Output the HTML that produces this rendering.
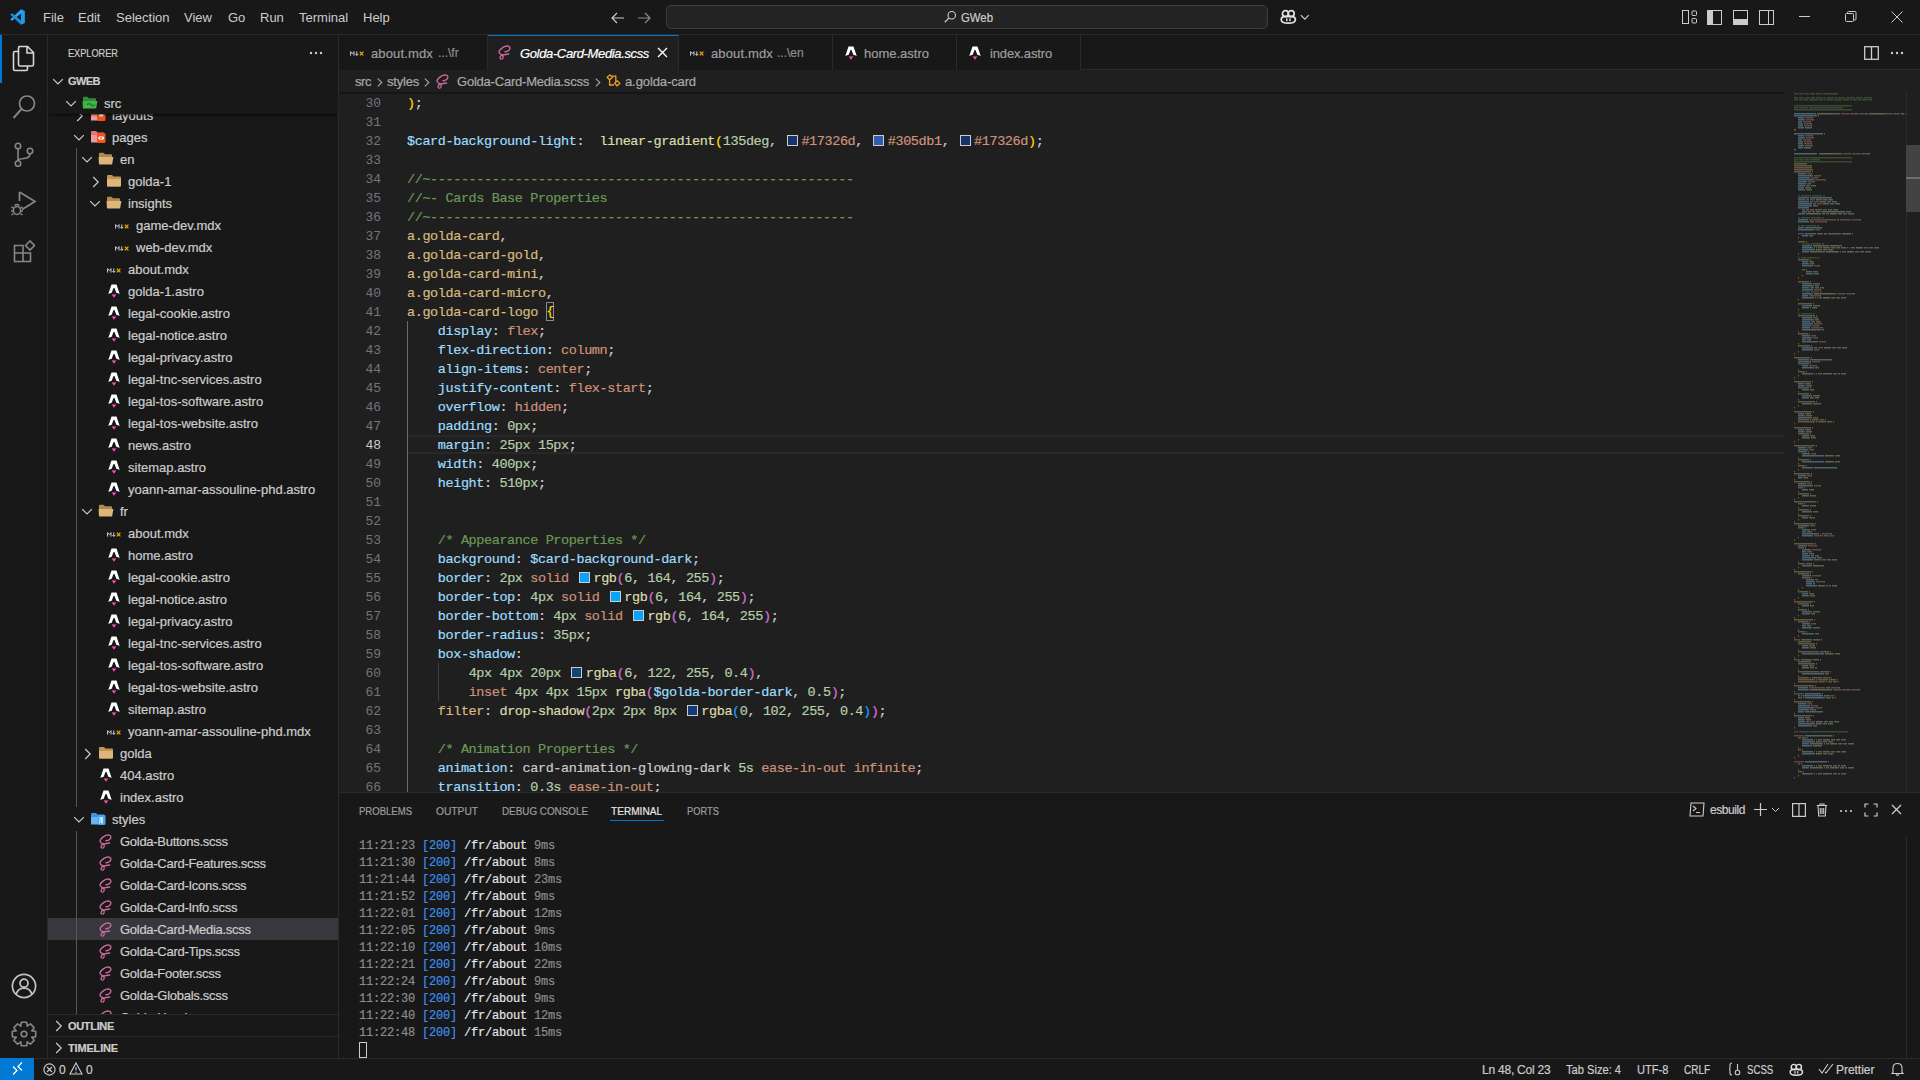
<!DOCTYPE html><html><head><meta charset="utf-8"><style>
*{box-sizing:border-box;margin:0;padding:0}
html,body{width:1920px;height:1080px;overflow:hidden;background:#181818;font-family:"Liberation Sans",sans-serif;color:#cccccc;font-size:13px}
span.abs{-webkit-text-stroke:0.2px currentColor}
.abs{position:absolute}
svg{position:absolute;overflow:visible}
.mono{font-family:"Liberation Mono",monospace}
.menu span{position:absolute;top:9px;font-size:13px;color:#cccccc;line-height:17px}
.row{position:absolute;left:48px;width:290px;height:22px;line-height:22px;font-size:13px;color:#cccccc;white-space:nowrap}
.row .t{position:absolute;top:0}
.code{position:absolute;left:407px;font-family:"Liberation Mono",monospace;font-size:13.5px;letter-spacing:-0.4px;-webkit-text-stroke:0.2px currentColor;white-space:pre;height:19px;line-height:19px;color:#cccccc}
.ln{position:absolute;left:340px;width:41px;text-align:right;font-family:"Liberation Mono",monospace;font-size:13px;letter-spacing:-0.1px;height:19px;line-height:19px;color:#6e7681}
.v{color:#9cdcfe}.p{color:#9cdcfe}.s{color:#ce9178}.n{color:#b5cea8}.c{color:#6a9955}.sel{color:#d7ba7d}.f{color:#dcdcaa}
.b1{color:#ffd700}.b2{color:#da70d6}.b3{color:#179fff}
.sw{display:inline-block;width:11px;height:11px;border:1px solid #cccccc;margin:0 3.5px 0 2.5px;vertical-align:-1px;letter-spacing:0;-webkit-text-stroke:0}
.term{position:absolute;left:359px;font-family:"Liberation Mono",monospace;font-size:12px;letter-spacing:-0.2px;-webkit-text-stroke:0.2px currentColor;white-space:pre;height:17px;line-height:17px}
</style></head><body>
<div class="abs" style="left:0;top:0;width:1920px;height:35px;background:#181818;border-bottom:1px solid #2b2b2b"></div>
<svg style="left:9px;top:9px" width="17" height="16" viewBox="0 0 100 100">
<path fill="#1f9cf0" d="M72 2 L96 13 V87 L72 98 Z"/><path fill="#2aa5f5" d="M72 2 L80 22 L16 74 L4 66 Z"/><path fill="#1a8fe0" d="M4 34 L16 26 L80 78 L72 98 Z"/>
</svg>
<div class="menu">
<span style="left:43px">File</span>
<span style="left:78px">Edit</span>
<span style="left:116px">Selection</span>
<span style="left:184px">View</span>
<span style="left:228px">Go</span>
<span style="left:260px">Run</span>
<span style="left:299px">Terminal</span>
<span style="left:363px">Help</span>
</div>
<svg style="left:610px;top:10px" width="16" height="16" viewBox="0 0 16 16"><path d="M2 8 H14 M7 3 L2 8 L7 13" stroke="#cccccc" stroke-width="1.2" fill="none"/></svg>
<svg style="left:636px;top:10px" width="16" height="16" viewBox="0 0 16 16"><path d="M2 8 H14 M9 3 L14 8 L9 13" stroke="#8b8b8b" stroke-width="1.2" fill="none"/></svg>
<div class="abs" style="left:666px;top:5px;width:602px;height:24px;background:#242424;border:1px solid #3c3c3c;border-radius:5px"></div>
<svg style="left:943px;top:10px" width="14" height="14" viewBox="0 0 16 16"><circle cx="10" cy="6" r="4.3" stroke="#cccccc" stroke-width="1.3" fill="none"/><path d="M7 9 L2 14" stroke="#cccccc" stroke-width="1.4"/></svg>
<span class="abs" style="left:961px;top:9px;font-size:13px;line-height:17px;color:#cccccc;white-space:nowrap;transform:scaleX(0.8742);transform-origin:0 0;">GWeb</span>
<svg style="left:1280px;top:9px" width="17" height="15" viewBox="0 0 17 15"><circle cx="5.4" cy="4.6" r="3" fill="none" stroke="#e0e0e0" stroke-width="1.7"/><circle cx="11.2" cy="4.6" r="3" fill="none" stroke="#e0e0e0" stroke-width="1.7"/><path d="M1.2 10.8 Q1.2 7.6 4.5 7.6 H12.1 Q15.4 7.6 15.4 10.8 Q15.4 14.2 8.3 14.2 Q1.2 14.2 1.2 10.8 Z" fill="none" stroke="#e0e0e0" stroke-width="1.7"/><rect x="6" y="9.4" width="1.5" height="2.8" fill="#e0e0e0"/><rect x="9.2" y="9.4" width="1.5" height="2.8" fill="#e0e0e0"/></svg>
<svg style="left:1300px;top:14px" width="10" height="7" viewBox="0 0 10 7"><path d="M0.8 1.2 L4.8 5.2 L8.8 1.2" stroke="#cccccc" stroke-width="1.2" fill="none"/></svg>
<svg style="left:1682px;top:10px" width="16" height="14" viewBox="0 0 16 14"><rect x="0.5" y="0.5" width="6" height="13" fill="none" stroke="#cccccc"/><rect x="10" y="1" width="4.5" height="4.5" rx="1" fill="none" stroke="#cccccc"/><rect x="10" y="8.5" width="4.5" height="4.5" rx="1" fill="none" stroke="#cccccc"/></svg>
<svg style="left:1707px;top:10px" width="16" height="15" viewBox="0 0 16 15"><rect x="0.5" y="0.5" width="14" height="14" fill="none" stroke="#cccccc"/><rect x="1" y="1" width="5" height="13" fill="#cccccc"/></svg>
<svg style="left:1733px;top:10px" width="16" height="15" viewBox="0 0 16 15"><rect x="0.5" y="0.5" width="14" height="14" fill="none" stroke="#cccccc"/><rect x="1" y="9" width="13" height="5" fill="#cccccc"/></svg>
<svg style="left:1759px;top:10px" width="16" height="15" viewBox="0 0 16 15"><rect x="0.5" y="0.5" width="14" height="14" fill="none" stroke="#cccccc"/><path d="M9.5 1 V14" stroke="#cccccc"/></svg>
<svg style="left:1799px;top:16px" width="12" height="2" viewBox="0 0 12 2"><path d="M0 0.5 H11" stroke="#cccccc" stroke-width="1"/></svg>
<svg style="left:1845px;top:11px" width="12" height="12" viewBox="0 0 12 12"><rect x="0.5" y="2.5" width="8" height="8" rx="1" fill="none" stroke="#cccccc"/><path d="M2.5 2.5 V1.5 Q2.5 0.5 3.5 0.5 H10 Q11 0.5 11 1.5 V8 Q11 9 10 9 H9" fill="none" stroke="#cccccc"/></svg>
<svg style="left:1891px;top:11px" width="12" height="12" viewBox="0 0 12 12"><path d="M0.5 0.5 L11.5 11.5 M11.5 0.5 L0.5 11.5" stroke="#cccccc" stroke-width="1"/></svg>
<div class="abs" style="left:0;top:35px;width:48px;height:1023px;background:#181818;border-right:1px solid #2b2b2b"></div>
<div class="abs" style="left:0;top:35px;width:2px;height:48px;background:#0078d4"></div>
<svg style="left:12px;top:45px" width="24" height="27" viewBox="0 0 24 27">
<path d="M6.5 6.5 H3 Q1.5 6.5 1.5 8 V24 Q1.5 25.5 3 25.5 H14 Q15.5 25.5 15.5 24 V21" fill="none" stroke="#d7d7d7" stroke-width="1.6"/>
<path d="M6.5 1.5 H15.5 L21.5 7.5 V19.5 Q21.5 21 20 21 H8 Q6.5 21 6.5 19.5 V3 Q6.5 1.5 8 1.5 Z M15 1.5 V8 H21.5" fill="none" stroke="#d7d7d7" stroke-width="1.6"/>
</svg>
<svg style="left:12px;top:94px" width="25" height="26" viewBox="0 0 25 26">
<circle cx="15" cy="9.5" r="7.5" fill="none" stroke="#868686" stroke-width="1.7"/><path d="M9.5 15 L1.5 24" stroke="#868686" stroke-width="1.9"/></svg>
<svg style="left:13px;top:142px" width="22" height="26" viewBox="0 0 22 26">
<circle cx="5" cy="4" r="2.7" fill="none" stroke="#868686" stroke-width="1.6"/><circle cx="5" cy="21.5" r="2.7" fill="none" stroke="#868686" stroke-width="1.6"/><circle cx="17" cy="9" r="2.7" fill="none" stroke="#868686" stroke-width="1.6"/>
<path d="M5 6.7 V18.8 M17 11.7 Q17 16 11 16.5 Q5 17 5 18.8" fill="none" stroke="#868686" stroke-width="1.6"/></svg>
<svg style="left:10px;top:190px" width="27" height="27" viewBox="0 0 27 27">
<path d="M9.5 2 L25 11.5 L12 19.5" fill="none" stroke="#868686" stroke-width="1.7"/><path d="M9.5 2 V11" stroke="#868686" stroke-width="1.7"/>
<ellipse cx="7" cy="20.5" rx="3.6" ry="4" fill="none" stroke="#868686" stroke-width="1.6"/><path d="M1.5 17 L3.5 18 M1 21 H3.5 M1.5 25 L3.5 23.5 M12.5 17 L10.5 18 M13 21 H10.5 M12.5 25 L10.5 23.5 M4.5 15.5 Q7 13.5 9.5 15.5" fill="none" stroke="#868686" stroke-width="1.4"/></svg>
<svg style="left:13px;top:239px" width="24" height="24" viewBox="0 0 24 24">
<path d="M1.5 6.5 H10 V14 H17.5 V22.5 H1.5 Z M1.5 14 H10 V22.5" fill="none" stroke="#868686" stroke-width="1.6"/>
<path d="M12.5 6.5 L17 2 L21.5 6.5 L17 11 Z" fill="none" stroke="#868686" stroke-width="1.6"/></svg>
<svg style="left:11px;top:973px" width="26" height="26" viewBox="0 0 26 26">
<circle cx="13" cy="13" r="11.6" fill="none" stroke="#c3c3c3" stroke-width="1.7"/><circle cx="13" cy="10.2" r="4" fill="none" stroke="#c3c3c3" stroke-width="1.7"/>
<path d="M5.2 21.2 Q7 15.2 13 15.2 Q19 15.2 20.8 21.2" fill="none" stroke="#c3c3c3" stroke-width="1.7"/></svg>
<svg style="left:11px;top:1021px" width="26" height="26" viewBox="0 0 26 26">
<path d="M24.71 10.38 L24.71 15.62 L20.76 16.47 L20.94 16.04 L23.13 19.43 L19.43 23.13 L16.04 20.94 L16.47 20.76 L15.62 24.71 L10.38 24.71 L9.53 20.76 L9.96 20.94 L6.57 23.13 L2.87 19.43 L5.06 16.04 L5.24 16.47 L1.29 15.62 L1.29 10.38 L5.24 9.53 L5.06 9.96 L2.87 6.57 L6.57 2.87 L9.96 5.06 L9.53 5.24 L10.38 1.29 L15.62 1.29 L16.47 5.24 L16.04 5.06 L19.43 2.87 L23.13 6.57 L20.94 9.96 L20.76 9.53 Z" fill="none" stroke="#868686" stroke-width="1.6" stroke-linejoin="round"/><circle cx="13" cy="13" r="2.8" fill="none" stroke="#868686" stroke-width="1.6"/></svg>
<div class="abs" style="left:48px;top:35px;width:291px;height:1023px;background:#181818;border-right:1px solid #2b2b2b"></div>
<span class="abs" style="left:68px;top:46px;font-size:11px;line-height:15px;color:#cccccc;white-space:nowrap;transform:scaleX(0.8346);transform-origin:0 0;">EXPLORER</span>
<svg style="left:309px;top:51px" width="14" height="4" viewBox="0 0 14 4"><circle cx="2" cy="2" r="1.2" fill="#cccccc"/><circle cx="7" cy="2" r="1.2" fill="#cccccc"/><circle cx="12" cy="2" r="1.2" fill="#cccccc"/></svg>
<svg style="left:52px;top:78px" width="12" height="8" viewBox="0 0 12 8"><path d="M1.2 1.2 L6 6 L10.8 1.2" stroke="#cccccc" stroke-width="1.2" fill="none"/></svg>
<span class="abs" style="left:68px;top:74px;font-size:11px;line-height:15px;color:#cccccc;white-space:nowrap;font-weight:bold;letter-spacing:-0.555px;">GWEB</span>
<div class="abs" style="left:48px;top:92px;width:290px;height:922px;overflow:hidden">
<div class="abs" style="left:0;top:826px;width:290px;height:22px;background:#37373d"></div>
<div class="abs" style="left:28px;top:56px;width:1px;height:659px;background:#585858"></div>
<div class="abs" style="left:28px;top:739px;width:1px;height:200px;background:#585858"></div>
<svg style="left:28px;top:18px" width="8" height="12" viewBox="0 0 8 12"><path d="M1.2 1 L6.2 6 L1.2 11" stroke="#cccccc" stroke-width="1.2" fill="none"/></svg>
<svg style="left:42px;top:16px" width="16" height="14" viewBox="0 0 16 14"><path d="M1 2 Q1 1 2 1 H6 L7.5 2.5 H14 V12 H1 Z" fill="#e57373"/><path d="M1 5 H10 V12.5 H1 Z" fill="#ef9a9a"/><rect x="7" y="3" width="8.5" height="10" rx="1.5" fill="#f4511e"/><ellipse cx="11.2" cy="7" rx="2.5" ry="1.5" fill="#fff"/></svg>
<span class="abs" style="left:64px;top:13px;line-height:22px;font-size:13px;color:#cccccc;white-space:nowrap;letter-spacing:0">layouts</span>
<svg style="left:25px;top:42px" width="12" height="8" viewBox="0 0 12 8"><path d="M1.2 1.2 L6 6 L10.8 1.2" stroke="#cccccc" stroke-width="1.2" fill="none"/></svg>
<svg style="left:42px;top:38px" width="16" height="14" viewBox="0 0 16 14"><path d="M1 2 Q1 1 2 1 H6 L7.5 2.5 H14 V12 H1 Z" fill="#e57373"/><path d="M1 5 H10 V12.5 H1 Z" fill="#ef9a9a"/><rect x="7" y="3" width="8.5" height="10" rx="1.5" fill="#f4511e"/><ellipse cx="11.2" cy="8" rx="3" ry="1.8" fill="#fff"/><circle cx="11.2" cy="8" r="1" fill="#f4511e"/></svg>
<span class="abs" style="left:64px;top:35px;line-height:22px;font-size:13px;color:#cccccc;white-space:nowrap;letter-spacing:0">pages</span>
<svg style="left:33px;top:64px" width="12" height="8" viewBox="0 0 12 8"><path d="M1.2 1.2 L6 6 L10.8 1.2" stroke="#cccccc" stroke-width="1.2" fill="none"/></svg>
<svg style="left:50px;top:60px" width="16" height="13" viewBox="0 0 16 13"><path d="M1 1.5 Q1 0.8 1.8 0.8 H5.5 L7 2.2 H13.2 Q14 2.2 14 3 V6 H1 Z" fill="#b08a52"/><path d="M0.6 5 H15.4 L14.2 12 Q14.1 12.4 13.6 12.4 H1.6 Q1 12.4 0.9 11.8 Z" fill="#dcb67a"/></svg>
<span class="abs" style="left:72px;top:57px;line-height:22px;font-size:13px;color:#cccccc;white-space:nowrap;letter-spacing:0">en</span>
<svg style="left:44px;top:84px" width="8" height="12" viewBox="0 0 8 12"><path d="M1.2 1 L6.2 6 L1.2 11" stroke="#cccccc" stroke-width="1.2" fill="none"/></svg>
<svg style="left:58px;top:82px" width="16" height="13" viewBox="0 0 16 13"><path d="M1 2 Q1 1 2 1 H6 L7.5 2.5 H14 Q15 2.5 15 3.5 V11.5 Q15 12.5 14 12.5 H2 Q1 12.5 1 11.5 Z" fill="#c09553"/><path d="M1 5 H15 V11.5 Q15 12.5 14 12.5 H2 Q1 12.5 1 11.5 Z" fill="#dcb67a"/></svg>
<span class="abs" style="left:80px;top:79px;line-height:22px;font-size:13px;color:#cccccc;white-space:nowrap;letter-spacing:0">golda-1</span>
<svg style="left:41px;top:108px" width="12" height="8" viewBox="0 0 12 8"><path d="M1.2 1.2 L6 6 L10.8 1.2" stroke="#cccccc" stroke-width="1.2" fill="none"/></svg>
<svg style="left:58px;top:104px" width="16" height="13" viewBox="0 0 16 13"><path d="M1 1.5 Q1 0.8 1.8 0.8 H5.5 L7 2.2 H13.2 Q14 2.2 14 3 V6 H1 Z" fill="#b08a52"/><path d="M0.6 5 H15.4 L14.2 12 Q14.1 12.4 13.6 12.4 H1.6 Q1 12.4 0.9 11.8 Z" fill="#dcb67a"/></svg>
<span class="abs" style="left:80px;top:101px;line-height:22px;font-size:13px;color:#cccccc;white-space:nowrap;letter-spacing:0">insights</span>
<svg style="left:67px;top:132px" width="14" height="5" viewBox="0 0 14 5"><path d="M0.6 4.6 V0.6 L2.3 2.6 L4 0.6 V4.6" stroke="#d0d0d0" stroke-width="1" fill="none"/><path d="M6.8 0.4 V4.4 M5.3 2.9 L6.8 4.4 L8.3 2.9" stroke="#d0d0d0" stroke-width="1" fill="none"/><path d="M9.8 0.6 L13.4 4.4 M13.4 0.6 L9.8 4.4" stroke="#f9ac00" stroke-width="1.15"/></svg>
<span class="abs" style="left:88px;top:123px;line-height:22px;font-size:13px;color:#cccccc;white-space:nowrap;letter-spacing:0">game-dev.mdx</span>
<svg style="left:67px;top:154px" width="14" height="5" viewBox="0 0 14 5"><path d="M0.6 4.6 V0.6 L2.3 2.6 L4 0.6 V4.6" stroke="#d0d0d0" stroke-width="1" fill="none"/><path d="M6.8 0.4 V4.4 M5.3 2.9 L6.8 4.4 L8.3 2.9" stroke="#d0d0d0" stroke-width="1" fill="none"/><path d="M9.8 0.6 L13.4 4.4 M13.4 0.6 L9.8 4.4" stroke="#f9ac00" stroke-width="1.15"/></svg>
<span class="abs" style="left:88px;top:145px;line-height:22px;font-size:13px;color:#cccccc;white-space:nowrap;letter-spacing:0">web-dev.mdx</span>
<svg style="left:59px;top:176px" width="14" height="5" viewBox="0 0 14 5"><path d="M0.6 4.6 V0.6 L2.3 2.6 L4 0.6 V4.6" stroke="#d0d0d0" stroke-width="1" fill="none"/><path d="M6.8 0.4 V4.4 M5.3 2.9 L6.8 4.4 L8.3 2.9" stroke="#d0d0d0" stroke-width="1" fill="none"/><path d="M9.8 0.6 L13.4 4.4 M13.4 0.6 L9.8 4.4" stroke="#f9ac00" stroke-width="1.15"/></svg>
<span class="abs" style="left:80px;top:167px;line-height:22px;font-size:13px;color:#cccccc;white-space:nowrap;letter-spacing:0">about.mdx</span>
<svg style="left:60px;top:192px" width="12" height="14" viewBox="0 0 12 14"><path d="M3.5 0.4 H8.5 L11.7 10 Q10 9 8.3 8.8 L6.7 4.4 Q6 3 5.3 4.4 L3.7 8.8 Q2 9 0.3 10 Z" fill="#ffffff"/><path d="M3.7 10.1 Q6 11.1 8.3 10.1 Q7.7 12 6 13.7 Q4.3 12 3.7 10.1 Z" fill="#ff4fc0"/></svg>
<span class="abs" style="left:80px;top:189px;line-height:22px;font-size:13px;color:#cccccc;white-space:nowrap;letter-spacing:0">golda-1.astro</span>
<svg style="left:60px;top:214px" width="12" height="14" viewBox="0 0 12 14"><path d="M3.5 0.4 H8.5 L11.7 10 Q10 9 8.3 8.8 L6.7 4.4 Q6 3 5.3 4.4 L3.7 8.8 Q2 9 0.3 10 Z" fill="#ffffff"/><path d="M3.7 10.1 Q6 11.1 8.3 10.1 Q7.7 12 6 13.7 Q4.3 12 3.7 10.1 Z" fill="#ff4fc0"/></svg>
<span class="abs" style="left:80px;top:211px;line-height:22px;font-size:13px;color:#cccccc;white-space:nowrap;letter-spacing:0">legal-cookie.astro</span>
<svg style="left:60px;top:236px" width="12" height="14" viewBox="0 0 12 14"><path d="M3.5 0.4 H8.5 L11.7 10 Q10 9 8.3 8.8 L6.7 4.4 Q6 3 5.3 4.4 L3.7 8.8 Q2 9 0.3 10 Z" fill="#ffffff"/><path d="M3.7 10.1 Q6 11.1 8.3 10.1 Q7.7 12 6 13.7 Q4.3 12 3.7 10.1 Z" fill="#ff4fc0"/></svg>
<span class="abs" style="left:80px;top:233px;line-height:22px;font-size:13px;color:#cccccc;white-space:nowrap;letter-spacing:0">legal-notice.astro</span>
<svg style="left:60px;top:258px" width="12" height="14" viewBox="0 0 12 14"><path d="M3.5 0.4 H8.5 L11.7 10 Q10 9 8.3 8.8 L6.7 4.4 Q6 3 5.3 4.4 L3.7 8.8 Q2 9 0.3 10 Z" fill="#ffffff"/><path d="M3.7 10.1 Q6 11.1 8.3 10.1 Q7.7 12 6 13.7 Q4.3 12 3.7 10.1 Z" fill="#ff4fc0"/></svg>
<span class="abs" style="left:80px;top:255px;line-height:22px;font-size:13px;color:#cccccc;white-space:nowrap;letter-spacing:0">legal-privacy.astro</span>
<svg style="left:60px;top:280px" width="12" height="14" viewBox="0 0 12 14"><path d="M3.5 0.4 H8.5 L11.7 10 Q10 9 8.3 8.8 L6.7 4.4 Q6 3 5.3 4.4 L3.7 8.8 Q2 9 0.3 10 Z" fill="#ffffff"/><path d="M3.7 10.1 Q6 11.1 8.3 10.1 Q7.7 12 6 13.7 Q4.3 12 3.7 10.1 Z" fill="#ff4fc0"/></svg>
<span class="abs" style="left:80px;top:277px;line-height:22px;font-size:13px;color:#cccccc;white-space:nowrap;letter-spacing:0">legal-tnc-services.astro</span>
<svg style="left:60px;top:302px" width="12" height="14" viewBox="0 0 12 14"><path d="M3.5 0.4 H8.5 L11.7 10 Q10 9 8.3 8.8 L6.7 4.4 Q6 3 5.3 4.4 L3.7 8.8 Q2 9 0.3 10 Z" fill="#ffffff"/><path d="M3.7 10.1 Q6 11.1 8.3 10.1 Q7.7 12 6 13.7 Q4.3 12 3.7 10.1 Z" fill="#ff4fc0"/></svg>
<span class="abs" style="left:80px;top:299px;line-height:22px;font-size:13px;color:#cccccc;white-space:nowrap;letter-spacing:0">legal-tos-software.astro</span>
<svg style="left:60px;top:324px" width="12" height="14" viewBox="0 0 12 14"><path d="M3.5 0.4 H8.5 L11.7 10 Q10 9 8.3 8.8 L6.7 4.4 Q6 3 5.3 4.4 L3.7 8.8 Q2 9 0.3 10 Z" fill="#ffffff"/><path d="M3.7 10.1 Q6 11.1 8.3 10.1 Q7.7 12 6 13.7 Q4.3 12 3.7 10.1 Z" fill="#ff4fc0"/></svg>
<span class="abs" style="left:80px;top:321px;line-height:22px;font-size:13px;color:#cccccc;white-space:nowrap;letter-spacing:0">legal-tos-website.astro</span>
<svg style="left:60px;top:346px" width="12" height="14" viewBox="0 0 12 14"><path d="M3.5 0.4 H8.5 L11.7 10 Q10 9 8.3 8.8 L6.7 4.4 Q6 3 5.3 4.4 L3.7 8.8 Q2 9 0.3 10 Z" fill="#ffffff"/><path d="M3.7 10.1 Q6 11.1 8.3 10.1 Q7.7 12 6 13.7 Q4.3 12 3.7 10.1 Z" fill="#ff4fc0"/></svg>
<span class="abs" style="left:80px;top:343px;line-height:22px;font-size:13px;color:#cccccc;white-space:nowrap;letter-spacing:0">news.astro</span>
<svg style="left:60px;top:368px" width="12" height="14" viewBox="0 0 12 14"><path d="M3.5 0.4 H8.5 L11.7 10 Q10 9 8.3 8.8 L6.7 4.4 Q6 3 5.3 4.4 L3.7 8.8 Q2 9 0.3 10 Z" fill="#ffffff"/><path d="M3.7 10.1 Q6 11.1 8.3 10.1 Q7.7 12 6 13.7 Q4.3 12 3.7 10.1 Z" fill="#ff4fc0"/></svg>
<span class="abs" style="left:80px;top:365px;line-height:22px;font-size:13px;color:#cccccc;white-space:nowrap;letter-spacing:0">sitemap.astro</span>
<svg style="left:60px;top:390px" width="12" height="14" viewBox="0 0 12 14"><path d="M3.5 0.4 H8.5 L11.7 10 Q10 9 8.3 8.8 L6.7 4.4 Q6 3 5.3 4.4 L3.7 8.8 Q2 9 0.3 10 Z" fill="#ffffff"/><path d="M3.7 10.1 Q6 11.1 8.3 10.1 Q7.7 12 6 13.7 Q4.3 12 3.7 10.1 Z" fill="#ff4fc0"/></svg>
<span class="abs" style="left:80px;top:387px;line-height:22px;font-size:13px;color:#cccccc;white-space:nowrap;letter-spacing:0">yoann-amar-assouline-phd.astro</span>
<svg style="left:33px;top:416px" width="12" height="8" viewBox="0 0 12 8"><path d="M1.2 1.2 L6 6 L10.8 1.2" stroke="#cccccc" stroke-width="1.2" fill="none"/></svg>
<svg style="left:50px;top:412px" width="16" height="13" viewBox="0 0 16 13"><path d="M1 1.5 Q1 0.8 1.8 0.8 H5.5 L7 2.2 H13.2 Q14 2.2 14 3 V6 H1 Z" fill="#b08a52"/><path d="M0.6 5 H15.4 L14.2 12 Q14.1 12.4 13.6 12.4 H1.6 Q1 12.4 0.9 11.8 Z" fill="#dcb67a"/></svg>
<span class="abs" style="left:72px;top:409px;line-height:22px;font-size:13px;color:#cccccc;white-space:nowrap;letter-spacing:0">fr</span>
<svg style="left:59px;top:440px" width="14" height="5" viewBox="0 0 14 5"><path d="M0.6 4.6 V0.6 L2.3 2.6 L4 0.6 V4.6" stroke="#d0d0d0" stroke-width="1" fill="none"/><path d="M6.8 0.4 V4.4 M5.3 2.9 L6.8 4.4 L8.3 2.9" stroke="#d0d0d0" stroke-width="1" fill="none"/><path d="M9.8 0.6 L13.4 4.4 M13.4 0.6 L9.8 4.4" stroke="#f9ac00" stroke-width="1.15"/></svg>
<span class="abs" style="left:80px;top:431px;line-height:22px;font-size:13px;color:#cccccc;white-space:nowrap;letter-spacing:0">about.mdx</span>
<svg style="left:60px;top:456px" width="12" height="14" viewBox="0 0 12 14"><path d="M3.5 0.4 H8.5 L11.7 10 Q10 9 8.3 8.8 L6.7 4.4 Q6 3 5.3 4.4 L3.7 8.8 Q2 9 0.3 10 Z" fill="#ffffff"/><path d="M3.7 10.1 Q6 11.1 8.3 10.1 Q7.7 12 6 13.7 Q4.3 12 3.7 10.1 Z" fill="#ff4fc0"/></svg>
<span class="abs" style="left:80px;top:453px;line-height:22px;font-size:13px;color:#cccccc;white-space:nowrap;letter-spacing:0">home.astro</span>
<svg style="left:60px;top:478px" width="12" height="14" viewBox="0 0 12 14"><path d="M3.5 0.4 H8.5 L11.7 10 Q10 9 8.3 8.8 L6.7 4.4 Q6 3 5.3 4.4 L3.7 8.8 Q2 9 0.3 10 Z" fill="#ffffff"/><path d="M3.7 10.1 Q6 11.1 8.3 10.1 Q7.7 12 6 13.7 Q4.3 12 3.7 10.1 Z" fill="#ff4fc0"/></svg>
<span class="abs" style="left:80px;top:475px;line-height:22px;font-size:13px;color:#cccccc;white-space:nowrap;letter-spacing:0">legal-cookie.astro</span>
<svg style="left:60px;top:500px" width="12" height="14" viewBox="0 0 12 14"><path d="M3.5 0.4 H8.5 L11.7 10 Q10 9 8.3 8.8 L6.7 4.4 Q6 3 5.3 4.4 L3.7 8.8 Q2 9 0.3 10 Z" fill="#ffffff"/><path d="M3.7 10.1 Q6 11.1 8.3 10.1 Q7.7 12 6 13.7 Q4.3 12 3.7 10.1 Z" fill="#ff4fc0"/></svg>
<span class="abs" style="left:80px;top:497px;line-height:22px;font-size:13px;color:#cccccc;white-space:nowrap;letter-spacing:0">legal-notice.astro</span>
<svg style="left:60px;top:522px" width="12" height="14" viewBox="0 0 12 14"><path d="M3.5 0.4 H8.5 L11.7 10 Q10 9 8.3 8.8 L6.7 4.4 Q6 3 5.3 4.4 L3.7 8.8 Q2 9 0.3 10 Z" fill="#ffffff"/><path d="M3.7 10.1 Q6 11.1 8.3 10.1 Q7.7 12 6 13.7 Q4.3 12 3.7 10.1 Z" fill="#ff4fc0"/></svg>
<span class="abs" style="left:80px;top:519px;line-height:22px;font-size:13px;color:#cccccc;white-space:nowrap;letter-spacing:0">legal-privacy.astro</span>
<svg style="left:60px;top:544px" width="12" height="14" viewBox="0 0 12 14"><path d="M3.5 0.4 H8.5 L11.7 10 Q10 9 8.3 8.8 L6.7 4.4 Q6 3 5.3 4.4 L3.7 8.8 Q2 9 0.3 10 Z" fill="#ffffff"/><path d="M3.7 10.1 Q6 11.1 8.3 10.1 Q7.7 12 6 13.7 Q4.3 12 3.7 10.1 Z" fill="#ff4fc0"/></svg>
<span class="abs" style="left:80px;top:541px;line-height:22px;font-size:13px;color:#cccccc;white-space:nowrap;letter-spacing:0">legal-tnc-services.astro</span>
<svg style="left:60px;top:566px" width="12" height="14" viewBox="0 0 12 14"><path d="M3.5 0.4 H8.5 L11.7 10 Q10 9 8.3 8.8 L6.7 4.4 Q6 3 5.3 4.4 L3.7 8.8 Q2 9 0.3 10 Z" fill="#ffffff"/><path d="M3.7 10.1 Q6 11.1 8.3 10.1 Q7.7 12 6 13.7 Q4.3 12 3.7 10.1 Z" fill="#ff4fc0"/></svg>
<span class="abs" style="left:80px;top:563px;line-height:22px;font-size:13px;color:#cccccc;white-space:nowrap;letter-spacing:0">legal-tos-software.astro</span>
<svg style="left:60px;top:588px" width="12" height="14" viewBox="0 0 12 14"><path d="M3.5 0.4 H8.5 L11.7 10 Q10 9 8.3 8.8 L6.7 4.4 Q6 3 5.3 4.4 L3.7 8.8 Q2 9 0.3 10 Z" fill="#ffffff"/><path d="M3.7 10.1 Q6 11.1 8.3 10.1 Q7.7 12 6 13.7 Q4.3 12 3.7 10.1 Z" fill="#ff4fc0"/></svg>
<span class="abs" style="left:80px;top:585px;line-height:22px;font-size:13px;color:#cccccc;white-space:nowrap;letter-spacing:0">legal-tos-website.astro</span>
<svg style="left:60px;top:610px" width="12" height="14" viewBox="0 0 12 14"><path d="M3.5 0.4 H8.5 L11.7 10 Q10 9 8.3 8.8 L6.7 4.4 Q6 3 5.3 4.4 L3.7 8.8 Q2 9 0.3 10 Z" fill="#ffffff"/><path d="M3.7 10.1 Q6 11.1 8.3 10.1 Q7.7 12 6 13.7 Q4.3 12 3.7 10.1 Z" fill="#ff4fc0"/></svg>
<span class="abs" style="left:80px;top:607px;line-height:22px;font-size:13px;color:#cccccc;white-space:nowrap;letter-spacing:0">sitemap.astro</span>
<svg style="left:59px;top:638px" width="14" height="5" viewBox="0 0 14 5"><path d="M0.6 4.6 V0.6 L2.3 2.6 L4 0.6 V4.6" stroke="#d0d0d0" stroke-width="1" fill="none"/><path d="M6.8 0.4 V4.4 M5.3 2.9 L6.8 4.4 L8.3 2.9" stroke="#d0d0d0" stroke-width="1" fill="none"/><path d="M9.8 0.6 L13.4 4.4 M13.4 0.6 L9.8 4.4" stroke="#f9ac00" stroke-width="1.15"/></svg>
<span class="abs" style="left:80px;top:629px;line-height:22px;font-size:13px;color:#cccccc;white-space:nowrap;letter-spacing:0">yoann-amar-assouline-phd.mdx</span>
<svg style="left:36px;top:656px" width="8" height="12" viewBox="0 0 8 12"><path d="M1.2 1 L6.2 6 L1.2 11" stroke="#cccccc" stroke-width="1.2" fill="none"/></svg>
<svg style="left:50px;top:654px" width="16" height="13" viewBox="0 0 16 13"><path d="M1 2 Q1 1 2 1 H6 L7.5 2.5 H14 Q15 2.5 15 3.5 V11.5 Q15 12.5 14 12.5 H2 Q1 12.5 1 11.5 Z" fill="#c09553"/><path d="M1 5 H15 V11.5 Q15 12.5 14 12.5 H2 Q1 12.5 1 11.5 Z" fill="#dcb67a"/></svg>
<span class="abs" style="left:72px;top:651px;line-height:22px;font-size:13px;color:#cccccc;white-space:nowrap;letter-spacing:0">golda</span>
<svg style="left:52px;top:676px" width="12" height="14" viewBox="0 0 12 14"><path d="M3.5 0.4 H8.5 L11.7 10 Q10 9 8.3 8.8 L6.7 4.4 Q6 3 5.3 4.4 L3.7 8.8 Q2 9 0.3 10 Z" fill="#ffffff"/><path d="M3.7 10.1 Q6 11.1 8.3 10.1 Q7.7 12 6 13.7 Q4.3 12 3.7 10.1 Z" fill="#ff4fc0"/></svg>
<span class="abs" style="left:72px;top:673px;line-height:22px;font-size:13px;color:#cccccc;white-space:nowrap;letter-spacing:0">404.astro</span>
<svg style="left:52px;top:698px" width="12" height="14" viewBox="0 0 12 14"><path d="M3.5 0.4 H8.5 L11.7 10 Q10 9 8.3 8.8 L6.7 4.4 Q6 3 5.3 4.4 L3.7 8.8 Q2 9 0.3 10 Z" fill="#ffffff"/><path d="M3.7 10.1 Q6 11.1 8.3 10.1 Q7.7 12 6 13.7 Q4.3 12 3.7 10.1 Z" fill="#ff4fc0"/></svg>
<span class="abs" style="left:72px;top:695px;line-height:22px;font-size:13px;color:#cccccc;white-space:nowrap;letter-spacing:0">index.astro</span>
<svg style="left:25px;top:724px" width="12" height="8" viewBox="0 0 12 8"><path d="M1.2 1.2 L6 6 L10.8 1.2" stroke="#cccccc" stroke-width="1.2" fill="none"/></svg>
<svg style="left:42px;top:720px" width="16" height="14" viewBox="0 0 16 14"><path d="M1 2 Q1 1 2 1 H6 L7.5 2.5 H14 V12 H1 Z" fill="#4a8fd4"/><path d="M1 5 H9 V12.5 H1 Z" fill="#64b5f6"/><path d="M8 3 H14.5 Q15.5 3 15.5 4 V11.5 Q15.5 13 14 13 H9.5 Q8 13 8 11.5 Z" fill="#42a5f5"/><path d="M12 5 V11.5" stroke="#fff" stroke-width="1.4"/><path d="M10 5 Q10.5 9 9.5 11.5" stroke="#fff" stroke-width="1" fill="none"/></svg>
<span class="abs" style="left:64px;top:717px;line-height:22px;font-size:13px;color:#cccccc;white-space:nowrap;letter-spacing:0">styles</span>
<svg style="left:51px;top:742px" width="13" height="15" viewBox="0 0 14 16"><path d="M7.5 7.2 C11 6.8 13.6 4.6 12.6 2.4 C11.6 0.4 8 0.8 5.4 2.4 C2.4 4.4 0.4 6.6 1.4 8.6 C2.4 10.6 5 10.8 8 10.2 L11.5 9.6" stroke="#c96a9a" stroke-width="1.5" fill="none" stroke-linecap="round"/><path d="M4.6 10.6 C6.4 11.6 5.8 15.2 3.6 15.2 C1.4 15.2 1.8 12 4.6 10.6 Z" stroke="#c96a9a" stroke-width="1.4" fill="none"/></svg>
<span class="abs" style="left:72px;top:739px;line-height:22px;font-size:13px;color:#cccccc;white-space:nowrap;letter-spacing:-0.28px">Golda-Buttons.scss</span>
<svg style="left:51px;top:764px" width="13" height="15" viewBox="0 0 14 16"><path d="M7.5 7.2 C11 6.8 13.6 4.6 12.6 2.4 C11.6 0.4 8 0.8 5.4 2.4 C2.4 4.4 0.4 6.6 1.4 8.6 C2.4 10.6 5 10.8 8 10.2 L11.5 9.6" stroke="#c96a9a" stroke-width="1.5" fill="none" stroke-linecap="round"/><path d="M4.6 10.6 C6.4 11.6 5.8 15.2 3.6 15.2 C1.4 15.2 1.8 12 4.6 10.6 Z" stroke="#c96a9a" stroke-width="1.4" fill="none"/></svg>
<span class="abs" style="left:72px;top:761px;line-height:22px;font-size:13px;color:#cccccc;white-space:nowrap;letter-spacing:-0.28px">Golda-Card-Features.scss</span>
<svg style="left:51px;top:786px" width="13" height="15" viewBox="0 0 14 16"><path d="M7.5 7.2 C11 6.8 13.6 4.6 12.6 2.4 C11.6 0.4 8 0.8 5.4 2.4 C2.4 4.4 0.4 6.6 1.4 8.6 C2.4 10.6 5 10.8 8 10.2 L11.5 9.6" stroke="#c96a9a" stroke-width="1.5" fill="none" stroke-linecap="round"/><path d="M4.6 10.6 C6.4 11.6 5.8 15.2 3.6 15.2 C1.4 15.2 1.8 12 4.6 10.6 Z" stroke="#c96a9a" stroke-width="1.4" fill="none"/></svg>
<span class="abs" style="left:72px;top:783px;line-height:22px;font-size:13px;color:#cccccc;white-space:nowrap;letter-spacing:-0.28px">Golda-Card-Icons.scss</span>
<svg style="left:51px;top:808px" width="13" height="15" viewBox="0 0 14 16"><path d="M7.5 7.2 C11 6.8 13.6 4.6 12.6 2.4 C11.6 0.4 8 0.8 5.4 2.4 C2.4 4.4 0.4 6.6 1.4 8.6 C2.4 10.6 5 10.8 8 10.2 L11.5 9.6" stroke="#c96a9a" stroke-width="1.5" fill="none" stroke-linecap="round"/><path d="M4.6 10.6 C6.4 11.6 5.8 15.2 3.6 15.2 C1.4 15.2 1.8 12 4.6 10.6 Z" stroke="#c96a9a" stroke-width="1.4" fill="none"/></svg>
<span class="abs" style="left:72px;top:805px;line-height:22px;font-size:13px;color:#cccccc;white-space:nowrap;letter-spacing:-0.28px">Golda-Card-Info.scss</span>
<svg style="left:51px;top:830px" width="13" height="15" viewBox="0 0 14 16"><path d="M7.5 7.2 C11 6.8 13.6 4.6 12.6 2.4 C11.6 0.4 8 0.8 5.4 2.4 C2.4 4.4 0.4 6.6 1.4 8.6 C2.4 10.6 5 10.8 8 10.2 L11.5 9.6" stroke="#c96a9a" stroke-width="1.5" fill="none" stroke-linecap="round"/><path d="M4.6 10.6 C6.4 11.6 5.8 15.2 3.6 15.2 C1.4 15.2 1.8 12 4.6 10.6 Z" stroke="#c96a9a" stroke-width="1.4" fill="none"/></svg>
<span class="abs" style="left:72px;top:827px;line-height:22px;font-size:13px;color:#cccccc;white-space:nowrap;letter-spacing:-0.28px">Golda-Card-Media.scss</span>
<svg style="left:51px;top:852px" width="13" height="15" viewBox="0 0 14 16"><path d="M7.5 7.2 C11 6.8 13.6 4.6 12.6 2.4 C11.6 0.4 8 0.8 5.4 2.4 C2.4 4.4 0.4 6.6 1.4 8.6 C2.4 10.6 5 10.8 8 10.2 L11.5 9.6" stroke="#c96a9a" stroke-width="1.5" fill="none" stroke-linecap="round"/><path d="M4.6 10.6 C6.4 11.6 5.8 15.2 3.6 15.2 C1.4 15.2 1.8 12 4.6 10.6 Z" stroke="#c96a9a" stroke-width="1.4" fill="none"/></svg>
<span class="abs" style="left:72px;top:849px;line-height:22px;font-size:13px;color:#cccccc;white-space:nowrap;letter-spacing:-0.28px">Golda-Card-Tips.scss</span>
<svg style="left:51px;top:874px" width="13" height="15" viewBox="0 0 14 16"><path d="M7.5 7.2 C11 6.8 13.6 4.6 12.6 2.4 C11.6 0.4 8 0.8 5.4 2.4 C2.4 4.4 0.4 6.6 1.4 8.6 C2.4 10.6 5 10.8 8 10.2 L11.5 9.6" stroke="#c96a9a" stroke-width="1.5" fill="none" stroke-linecap="round"/><path d="M4.6 10.6 C6.4 11.6 5.8 15.2 3.6 15.2 C1.4 15.2 1.8 12 4.6 10.6 Z" stroke="#c96a9a" stroke-width="1.4" fill="none"/></svg>
<span class="abs" style="left:72px;top:871px;line-height:22px;font-size:13px;color:#cccccc;white-space:nowrap;letter-spacing:-0.28px">Golda-Footer.scss</span>
<svg style="left:51px;top:896px" width="13" height="15" viewBox="0 0 14 16"><path d="M7.5 7.2 C11 6.8 13.6 4.6 12.6 2.4 C11.6 0.4 8 0.8 5.4 2.4 C2.4 4.4 0.4 6.6 1.4 8.6 C2.4 10.6 5 10.8 8 10.2 L11.5 9.6" stroke="#c96a9a" stroke-width="1.5" fill="none" stroke-linecap="round"/><path d="M4.6 10.6 C6.4 11.6 5.8 15.2 3.6 15.2 C1.4 15.2 1.8 12 4.6 10.6 Z" stroke="#c96a9a" stroke-width="1.4" fill="none"/></svg>
<span class="abs" style="left:72px;top:893px;line-height:22px;font-size:13px;color:#cccccc;white-space:nowrap;letter-spacing:-0.28px">Golda-Globals.scss</span>
<svg style="left:51px;top:918px" width="13" height="15" viewBox="0 0 14 16"><path d="M7.5 7.2 C11 6.8 13.6 4.6 12.6 2.4 C11.6 0.4 8 0.8 5.4 2.4 C2.4 4.4 0.4 6.6 1.4 8.6 C2.4 10.6 5 10.8 8 10.2 L11.5 9.6" stroke="#c96a9a" stroke-width="1.5" fill="none" stroke-linecap="round"/><path d="M4.6 10.6 C6.4 11.6 5.8 15.2 3.6 15.2 C1.4 15.2 1.8 12 4.6 10.6 Z" stroke="#c96a9a" stroke-width="1.4" fill="none"/></svg>
<span class="abs" style="left:72px;top:915px;line-height:22px;font-size:13px;color:#cccccc;white-space:nowrap;letter-spacing:-0.28px">Golda-Header.scss</span>
</div>
<div class="abs" style="left:48px;top:92px;width:290px;height:22px;background:#181818;box-shadow:0 2px 2px -1px rgba(0,0,0,0.7)"></div>
<svg style="left:65px;top:100px" width="12" height="8" viewBox="0 0 12 8"><path d="M1.2 1.2 L6 6 L10.8 1.2" stroke="#cccccc" stroke-width="1.2" fill="none"/></svg>
<svg style="left:82px;top:96px" width="16" height="13" viewBox="0 0 16 13"><path d="M1 1.5 Q1 0.8 1.8 0.8 H5.5 L7 2.2 H13.2 Q14 2.2 14 3 V6 H1 Z" fill="#2e8b3a"/><path d="M0.6 5 H15.4 L14.2 12 Q14.1 12.4 13.6 12.4 H1.6 Q1 12.4 0.9 11.8 Z" fill="#43b649"/><path d="M5 8.8 Q7 6.8 9 8.8 Q11 10.8 13 8.8" stroke="#1f7a2c" stroke-width="1.3" fill="none"/></svg>
<span class="abs" style="left:104px;top:93px;line-height:22px;font-size:13px;color:#cccccc">src</span>
<div class="abs" style="left:48px;top:1014px;width:290px;height:22px;background:#181818;border-top:1px solid #2b2b2b"></div>
<svg style="left:55px;top:1020px" width="8" height="12" viewBox="0 0 8 12"><path d="M1.2 1 L6.2 6 L1.2 11" stroke="#cccccc" stroke-width="1.2" fill="none"/></svg>
<span class="abs" style="left:68px;top:1019px;font-size:11px;line-height:15px;color:#cccccc;white-space:nowrap;font-weight:bold;letter-spacing:-0.325px;">OUTLINE</span>
<div class="abs" style="left:48px;top:1036px;width:290px;height:22px;background:#181818;border-top:1px solid #2b2b2b"></div>
<svg style="left:55px;top:1042px" width="8" height="12" viewBox="0 0 8 12"><path d="M1.2 1 L6.2 6 L1.2 11" stroke="#cccccc" stroke-width="1.2" fill="none"/></svg>
<span class="abs" style="left:68px;top:1041px;font-size:11px;line-height:15px;color:#cccccc;white-space:nowrap;font-weight:bold;letter-spacing:-0.166px;">TIMELINE</span>
<div class="abs" style="left:339px;top:35px;width:1581px;height:760px;background:#1f1f1f"></div>
<div class="abs" style="left:339px;top:35px;width:1581px;height:35px;background:#181818;border-bottom:1px solid #2b2b2b"></div>
<div class="abs" style="left:339px;top:35px;width:149px;height:35px;background:#181818;border-right:1px solid #2b2b2b"></div>
<svg style="left:350px;top:51px" width="14" height="5" viewBox="0 0 14 5"><path d="M0.6 4.6 V0.6 L2.3 2.6 L4 0.6 V4.6" stroke="#d0d0d0" stroke-width="1" fill="none"/><path d="M6.8 0.4 V4.4 M5.3 2.9 L6.8 4.4 L8.3 2.9" stroke="#d0d0d0" stroke-width="1" fill="none"/><path d="M9.8 0.6 L13.4 4.4 M13.4 0.6 L9.8 4.4" stroke="#f9ac00" stroke-width="1.15"/></svg>
<span class="abs" style="left:371px;top:45px;font-size:13px;line-height:17px;color:#9d9d9d;white-space:nowrap;letter-spacing:0.144px;">about.mdx</span>
<span class="abs" style="left:438px;top:46px;font-size:12px;line-height:15px;color:#8b8b8b;white-space:nowrap;">...\fr</span>
<div class="abs" style="left:488px;top:35px;width:191px;height:35px;background:#1f1f1f;border-right:1px solid #2b2b2b;border-top:1px solid #0078d4"></div>
<svg style="left:498px;top:45px" width="13" height="15" viewBox="0 0 14 16"><path d="M7.5 7.2 C11 6.8 13.6 4.6 12.6 2.4 C11.6 0.4 8 0.8 5.4 2.4 C2.4 4.4 0.4 6.6 1.4 8.6 C2.4 10.6 5 10.8 8 10.2 L11.5 9.6" stroke="#c96a9a" stroke-width="1.5" fill="none" stroke-linecap="round"/><path d="M4.6 10.6 C6.4 11.6 5.8 15.2 3.6 15.2 C1.4 15.2 1.8 12 4.6 10.6 Z" stroke="#c96a9a" stroke-width="1.4" fill="none"/></svg>
<span class="abs" style="left:520px;top:45px;font-size:13px;line-height:17px;color:#ffffff;white-space:nowrap;font-style:italic;letter-spacing:-0.359px;">Golda-Card-Media.scss</span>
<svg style="left:657px;top:47px" width="11" height="11" viewBox="0 0 11 11"><path d="M1 1 L10 10 M10 1 L1 10" stroke="#ffffff" stroke-width="1.4"/></svg>
<div class="abs" style="left:679px;top:35px;width:154px;height:35px;background:#181818;border-right:1px solid #2b2b2b"></div>
<svg style="left:690px;top:51px" width="14" height="5" viewBox="0 0 14 5"><path d="M0.6 4.6 V0.6 L2.3 2.6 L4 0.6 V4.6" stroke="#d0d0d0" stroke-width="1" fill="none"/><path d="M6.8 0.4 V4.4 M5.3 2.9 L6.8 4.4 L8.3 2.9" stroke="#d0d0d0" stroke-width="1" fill="none"/><path d="M9.8 0.6 L13.4 4.4 M13.4 0.6 L9.8 4.4" stroke="#f9ac00" stroke-width="1.15"/></svg>
<span class="abs" style="left:711px;top:45px;font-size:13px;line-height:17px;color:#9d9d9d;white-space:nowrap;letter-spacing:0.144px;">about.mdx</span>
<span class="abs" style="left:777px;top:46px;font-size:12px;line-height:15px;color:#8b8b8b;white-space:nowrap;">...\en</span>
<div class="abs" style="left:833px;top:35px;width:124px;height:35px;background:#181818;border-right:1px solid #2b2b2b"></div>
<svg style="left:845px;top:46px" width="12" height="14" viewBox="0 0 12 14"><path d="M3.5 0.4 H8.5 L11.7 10 Q10 9 8.3 8.8 L6.7 4.4 Q6 3 5.3 4.4 L3.7 8.8 Q2 9 0.3 10 Z" fill="#ffffff"/><path d="M3.7 10.1 Q6 11.1 8.3 10.1 Q7.7 12 6 13.7 Q4.3 12 3.7 10.1 Z" fill="#ff4fc0"/></svg>
<span class="abs" style="left:864px;top:45px;font-size:13px;line-height:17px;color:#9d9d9d;white-space:nowrap;letter-spacing:-0.003px;">home.astro</span>
<div class="abs" style="left:957px;top:35px;width:124px;height:35px;background:#181818;border-right:1px solid #2b2b2b"></div>
<svg style="left:969px;top:46px" width="12" height="14" viewBox="0 0 12 14"><path d="M3.5 0.4 H8.5 L11.7 10 Q10 9 8.3 8.8 L6.7 4.4 Q6 3 5.3 4.4 L3.7 8.8 Q2 9 0.3 10 Z" fill="#ffffff"/><path d="M3.7 10.1 Q6 11.1 8.3 10.1 Q7.7 12 6 13.7 Q4.3 12 3.7 10.1 Z" fill="#ff4fc0"/></svg>
<span class="abs" style="left:990px;top:45px;font-size:13px;line-height:17px;color:#9d9d9d;white-space:nowrap;letter-spacing:-0.145px;">index.astro</span>
<svg style="left:1864px;top:46px" width="15" height="14" viewBox="0 0 15 14"><rect x="0.7" y="0.7" width="13.6" height="12.6" fill="none" stroke="#cccccc" stroke-width="1.3"/><path d="M7.5 1 V13" stroke="#cccccc" stroke-width="1.3"/></svg>
<svg style="left:1890px;top:51px" width="14" height="4" viewBox="0 0 14 4"><circle cx="2" cy="2" r="1.2" fill="#cccccc"/><circle cx="7" cy="2" r="1.2" fill="#cccccc"/><circle cx="12" cy="2" r="1.2" fill="#cccccc"/></svg>
<span class="abs" style="left:355px;top:73px;font-size:13px;line-height:17px;color:#a9a9a9;white-space:nowrap;letter-spacing:-0.443px;">src</span>
<svg style="left:377px;top:78px" width="6" height="9" viewBox="0 0 6 9"><path d="M0.8 0.6 L4.8 4.5 L0.8 8.4" stroke="#a9a9a9" stroke-width="1.1" fill="none"/></svg>
<span class="abs" style="left:387px;top:73px;font-size:13px;line-height:17px;color:#a9a9a9;white-space:nowrap;letter-spacing:-0.205px;">styles</span>
<svg style="left:424px;top:78px" width="6" height="9" viewBox="0 0 6 9"><path d="M0.8 0.6 L4.8 4.5 L0.8 8.4" stroke="#a9a9a9" stroke-width="1.1" fill="none"/></svg>
<svg style="left:436px;top:74px" width="13" height="15" viewBox="0 0 14 16"><path d="M7.5 7.2 C11 6.8 13.6 4.6 12.6 2.4 C11.6 0.4 8 0.8 5.4 2.4 C2.4 4.4 0.4 6.6 1.4 8.6 C2.4 10.6 5 10.8 8 10.2 L11.5 9.6" stroke="#c96a9a" stroke-width="1.5" fill="none" stroke-linecap="round"/><path d="M4.6 10.6 C6.4 11.6 5.8 15.2 3.6 15.2 C1.4 15.2 1.8 12 4.6 10.6 Z" stroke="#c96a9a" stroke-width="1.4" fill="none"/></svg>
<span class="abs" style="left:457px;top:73px;font-size:13px;line-height:17px;color:#a9a9a9;white-space:nowrap;letter-spacing:-0.216px;">Golda-Card-Media.scss</span>
<svg style="left:595px;top:78px" width="6" height="9" viewBox="0 0 6 9"><path d="M0.8 0.6 L4.8 4.5 L0.8 8.4" stroke="#a9a9a9" stroke-width="1.1" fill="none"/></svg>
<svg style="left:606px;top:74px" width="15" height="15" viewBox="0 0 15 15"><path d="M1.2 3.2 L4 0.8 L6.4 3.4 L3.6 5.8 Z M8.6 9.2 L11.4 6.8 L13.8 9.4 L11 11.8 Z M3.6 5.8 V11 H8 M5.2 2.1 H9.8 V7.8" fill="none" stroke="#ee9d28" stroke-width="1.3"/></svg>
<span class="abs" style="left:625px;top:73px;font-size:13px;line-height:17px;color:#a9a9a9;white-space:nowrap;letter-spacing:-0.106px;">a.golda-card</span>
<div class="abs" style="left:339px;top:93px;width:1445px;height:702px;overflow:hidden">
<div class="abs" style="left:68px;top:342px;width:1377px;height:19px;border-top:2px solid #282828;border-bottom:2px solid #282828"></div>
<div class="abs" style="left:68px;top:228px;width:1px;height:475px;background:#6a6a6a"></div>
<div class="abs" style="left:99px;top:570px;width:1px;height:38px;background:#404040"></div>
</div>
<div class="abs" style="left:0;top:0;width:1920px;height:1080px;clip-path:polygon(339px 93px,1784px 93px,1784px 795px,339px 795px)">
<div class="ln" style="top:94px;color:#6e7681">30</div>
<div class="code" style="top:94px"><span class="b1">)</span>;</div>
<div class="ln" style="top:113px;color:#6e7681">31</div>
<div class="ln" style="top:132px;color:#6e7681">32</div>
<div class="code" style="top:132px"><span class="v">$card-background-light</span>:  <span class="f">linear-gradient</span><span class="b1">(</span><span class="n">135deg</span>, <span class="sw" style="background:#17326d"></span><span class="s">#17326d</span>, <span class="sw" style="background:#305db1"></span><span class="s">#305db1</span>, <span class="sw" style="background:#17326d"></span><span class="s">#17326d</span><span class="b1">)</span>;</div>
<div class="ln" style="top:151px;color:#6e7681">33</div>
<div class="ln" style="top:170px;color:#6e7681">34</div>
<div class="code" style="top:170px"><span class="c">//~-------------------------------------------------------</span></div>
<div class="ln" style="top:189px;color:#6e7681">35</div>
<div class="code" style="top:189px"><span class="c">//~- Cards Base Properties</span></div>
<div class="ln" style="top:208px;color:#6e7681">36</div>
<div class="code" style="top:208px"><span class="c">//~-------------------------------------------------------</span></div>
<div class="ln" style="top:227px;color:#6e7681">37</div>
<div class="code" style="top:227px"><span class="sel">a.golda-card</span>,</div>
<div class="ln" style="top:246px;color:#6e7681">38</div>
<div class="code" style="top:246px"><span class="sel">a.golda-card-gold</span>,</div>
<div class="ln" style="top:265px;color:#6e7681">39</div>
<div class="code" style="top:265px"><span class="sel">a.golda-card-mini</span>,</div>
<div class="ln" style="top:284px;color:#6e7681">40</div>
<div class="code" style="top:284px"><span class="sel">a.golda-card-micro</span>,</div>
<div class="ln" style="top:303px;color:#6e7681">41</div>
<div class="code" style="top:303px"><span class="sel">a.golda-card-logo</span> <span class="b1" style="display:inline-block;width:8.5px;height:19px;vertical-align:top;box-shadow:inset 0 0 0 1px #8a8a8a;margin-left:0.3px;position:relative;top:-1px;letter-spacing:0;text-align:center">{</span></div>
<div class="ln" style="top:322px;color:#6e7681">42</div>
<div class="code" style="top:322px">    <span class="p">display</span>: <span class="s">flex</span>;</div>
<div class="ln" style="top:341px;color:#6e7681">43</div>
<div class="code" style="top:341px">    <span class="p">flex-direction</span>: <span class="s">column</span>;</div>
<div class="ln" style="top:360px;color:#6e7681">44</div>
<div class="code" style="top:360px">    <span class="p">align-items</span>: <span class="s">center</span>;</div>
<div class="ln" style="top:379px;color:#6e7681">45</div>
<div class="code" style="top:379px">    <span class="p">justify-content</span>: <span class="s">flex-start</span>;</div>
<div class="ln" style="top:398px;color:#6e7681">46</div>
<div class="code" style="top:398px">    <span class="p">overflow</span>: <span class="s">hidden</span>;</div>
<div class="ln" style="top:417px;color:#6e7681">47</div>
<div class="code" style="top:417px">    <span class="p">padding</span>: <span class="n">0px</span>;</div>
<div class="ln" style="top:436px;color:#cccccc">48</div>
<div class="code" style="top:436px">    <span class="p">margin</span>: <span class="n">25px</span> <span class="n">15px</span>;</div>
<div class="ln" style="top:455px;color:#6e7681">49</div>
<div class="code" style="top:455px">    <span class="p">width</span>: <span class="n">400px</span>;</div>
<div class="ln" style="top:474px;color:#6e7681">50</div>
<div class="code" style="top:474px">    <span class="p">height</span>: <span class="n">510px</span>;</div>
<div class="ln" style="top:493px;color:#6e7681">51</div>
<div class="ln" style="top:512px;color:#6e7681">52</div>
<div class="ln" style="top:531px;color:#6e7681">53</div>
<div class="code" style="top:531px">    <span class="c">/* Appearance Properties */</span></div>
<div class="ln" style="top:550px;color:#6e7681">54</div>
<div class="code" style="top:550px">    <span class="p">background</span>: <span class="v">$card-background-dark</span>;</div>
<div class="ln" style="top:569px;color:#6e7681">55</div>
<div class="code" style="top:569px">    <span class="p">border</span>: <span class="n">2px</span> <span class="s">solid</span> <span class="sw" style="background:#06a4ff"></span><span class="f">rgb</span><span class="b2">(</span><span class="n">6</span>, <span class="n">164</span>, <span class="n">255</span><span class="b2">)</span>;</div>
<div class="ln" style="top:588px;color:#6e7681">56</div>
<div class="code" style="top:588px">    <span class="p">border-top</span>: <span class="n">4px</span> <span class="s">solid</span> <span class="sw" style="background:#06a4ff"></span><span class="f">rgb</span><span class="b2">(</span><span class="n">6</span>, <span class="n">164</span>, <span class="n">255</span><span class="b2">)</span>;</div>
<div class="ln" style="top:607px;color:#6e7681">57</div>
<div class="code" style="top:607px">    <span class="p">border-bottom</span>: <span class="n">4px</span> <span class="s">solid</span> <span class="sw" style="background:#06a4ff"></span><span class="f">rgb</span><span class="b2">(</span><span class="n">6</span>, <span class="n">164</span>, <span class="n">255</span><span class="b2">)</span>;</div>
<div class="ln" style="top:626px;color:#6e7681">58</div>
<div class="code" style="top:626px">    <span class="p">border-radius</span>: <span class="n">35px</span>;</div>
<div class="ln" style="top:645px;color:#6e7681">59</div>
<div class="code" style="top:645px">    <span class="p">box-shadow</span>:</div>
<div class="ln" style="top:664px;color:#6e7681">60</div>
<div class="code" style="top:664px">        <span class="n">4px</span> <span class="n">4px</span> <span class="n">20px</span> <span class="sw" style="background:#067aff66"></span><span class="f">rgba</span><span class="b2">(</span><span class="n">6</span>, <span class="n">122</span>, <span class="n">255</span>, <span class="n">0.4</span><span class="b2">)</span>,</div>
<div class="ln" style="top:683px;color:#6e7681">61</div>
<div class="code" style="top:683px">        <span class="s">inset</span> <span class="n">4px</span> <span class="n">4px</span> <span class="n">15px</span> <span class="f">rgba</span><span class="b2">(</span><span class="v">$golda-border-dark</span>, <span class="n">0.5</span><span class="b2">)</span>;</div>
<div class="ln" style="top:702px;color:#6e7681">62</div>
<div class="code" style="top:702px">    <span class="sel">filter</span>: <span class="f">drop-shadow</span><span class="b2">(</span><span class="n">2px</span> <span class="n">2px</span> <span class="n">8px</span> <span class="sw" style="background:#0066ff66"></span><span class="f">rgba</span><span class="b3">(</span><span class="n">0</span>, <span class="n">102</span>, <span class="n">255</span>, <span class="n">0.4</span><span class="b3">)</span><span class="b2">)</span>;</div>
<div class="ln" style="top:721px;color:#6e7681">63</div>
<div class="ln" style="top:740px;color:#6e7681">64</div>
<div class="code" style="top:740px">    <span class="c">/* Animation Properties */</span></div>
<div class="ln" style="top:759px;color:#6e7681">65</div>
<div class="code" style="top:759px">    <span class="p">animation</span>: card-animation-glowing-dark <span class="n">5s</span> <span class="s">ease-in-out</span> <span class="s">infinite</span>;</div>
<div class="ln" style="top:778px;color:#6e7681">66</div>
<div class="code" style="top:778px">    <span class="p">transition</span>: <span class="n">0.3s</span> <span class="s">ease-in-out</span>;</div>
</div>
<div class="abs" style="left:339px;top:92px;width:1445px;height:3px;background:linear-gradient(#111,transparent)"></div>
<div class="abs" style="left:1784px;top:92px;width:136px;height:703px;background:#1f1f1f"></div>
<svg style="left:1794px;top:91px" width="112" height="690"><path fill="#6a9955" opacity="0.36" d="M0 2h4v1.6h-4zM5 2h5v1.6h-5zM11 2h4v1.6h-4zM16 2h5v1.6h-5zM22 2h6v1.6h-6zM29 2h15v1.6h-15zM0 6h4v1.6h-4zM5 6h5v1.6h-5zM11 6h5v1.6h-5zM17 6h4v1.6h-4zM22 6h6v1.6h-6zM29 6h3v1.6h-3zM33 6h7v1.6h-7zM41 6h2v1.6h-2zM44 6h7v1.6h-7zM52 6h9v1.6h-9zM62 6h7v1.6h-7zM70 6h8v1.6h-8zM0 8h4v1.6h-4zM5 8h3v1.6h-3zM9 8h5v1.6h-5zM15 8h9v1.6h-9zM25 8h4v1.6h-4zM30 8h1v1.6h-1zM32 8h7v1.6h-7zM40 8h8v1.6h-8zM49 8h6v1.6h-6zM56 8h2v1.6h-2zM59 8h4v1.6h-4zM64 8h3v1.6h-3zM68 8h5v1.6h-5zM74 8h4v1.6h-4zM0 14h58v1.6h-58zM0 16h4v1.6h-4zM5 16h9v1.6h-9zM15 16h34v1.6h-34zM0 18h58v1.6h-58zM0 66h58v1.6h-58zM0 68h4v1.6h-4zM5 68h5v1.6h-5zM11 68h4v1.6h-4zM16 68h10v1.6h-10zM0 70h58v1.6h-58zM4 104h2v1.6h-2zM7 104h10v1.6h-10zM18 104h10v1.6h-10zM29 104h2v1.6h-2zM4 126h2v1.6h-2zM7 126h9v1.6h-9zM17 126h10v1.6h-10zM28 126h2v1.6h-2zM4 134h2v1.6h-2zM7 134h4v1.6h-4zM12 134h10v1.6h-10zM23 134h2v1.6h-2zM8 152h2v1.6h-2zM11 152h5v1.6h-5zM17 152h10v1.6h-10zM28 152h2v1.6h-2zM4 166h2v1.6h-2zM7 166h5v1.6h-5zM13 166h10v1.6h-10zM24 166h2v1.6h-2zM8 200h2v1.6h-2zM11 200h5v1.6h-5zM17 200h8v1.6h-8zM26 200h2v1.6h-2zM4 222h2v1.6h-2zM7 222h11v1.6h-11zM19 222h2v1.6h-2zM0 640h4v1.6h-4zM5 640h10v1.6h-10zM16 640h38v1.6h-38z"/><path fill="#9cdcfe" opacity="0.36" d="M0 22h22v1.6h-22zM0 62h23v1.6h-23zM16 106h21v1.6h-21zM11 136h16v1.6h-16zM16 268h21v1.6h-21zM20 376h22v1.6h-22zM11 620h17v1.6h-17z"/><path fill="#dcdcaa" opacity="0.36" d="M23 22h15v1.6h-15zM75 22h15v1.6h-15zM25 62h15v1.6h-15zM22 108h3v1.6h-3zM26 110h3v1.6h-3zM29 112h3v1.6h-3zM12 122h11v1.6h-11zM36 122h4v1.6h-4zM19 154h10v1.6h-10zM36 154h5v1.6h-5zM29 156h4v1.6h-4zM62 156h4v1.6h-4zM22 158h3v1.6h-3zM16 160h10v1.6h-10zM32 160h11v1.6h-11zM53 160h4v1.6h-4zM20 202h15v1.6h-15zM29 206h4v1.6h-4zM30 256h4v1.6h-4zM29 282h4v1.6h-4zM31 364h6v1.6h-6zM31 370h6v1.6h-6zM20 468h4v1.6h-4zM19 474h5v1.6h-5zM24 494h4v1.6h-4zM31 562h6v1.6h-6zM16 598h15v1.6h-15zM22 630h4v1.6h-4zM22 632h3v1.6h-3zM29 648h4v1.6h-4zM22 650h3v1.6h-3zM16 652h11v1.6h-11zM36 652h4v1.6h-4zM19 654h5v1.6h-5zM29 660h4v1.6h-4zM22 662h3v1.6h-3zM29 674h4v1.6h-4zM16 676h11v1.6h-11zM36 676h4v1.6h-4zM29 682h4v1.6h-4z"/><path fill="#cccccc" opacity="0.36" d="M38 22h1v1.6h-1zM45 22h1v1.6h-1zM54 22h1v1.6h-1zM63 22h1v1.6h-1zM72 22h1v1.6h-1zM73 22h1v1.6h-1zM90 22h1v1.6h-1zM97 22h1v1.6h-1zM109 22h1v1.6h-1zM18 26h1v1.6h-1zM19 28h1v1.6h-1zM16 30h1v1.6h-1zM17 32h1v1.6h-1zM17 34h1v1.6h-1zM18 44h1v1.6h-1zM19 46h1v1.6h-1zM16 48h1v1.6h-1zM17 50h1v1.6h-1zM17 52h1v1.6h-1zM18 54h1v1.6h-1zM40 62h1v1.6h-1zM47 62h1v1.6h-1zM56 62h1v1.6h-1zM65 62h1v1.6h-1zM74 62h1v1.6h-1zM75 62h1v1.6h-1zM17 82h1v1.6h-1zM26 84h1v1.6h-1zM23 86h1v1.6h-1zM31 88h1v1.6h-1zM20 90h1v1.6h-1zM16 92h1v1.6h-1zM21 94h1v1.6h-1zM16 96h1v1.6h-1zM17 98h1v1.6h-1zM37 106h1v1.6h-1zM25 108h1v1.6h-1zM27 108h1v1.6h-1zM32 108h1v1.6h-1zM37 108h1v1.6h-1zM38 108h1v1.6h-1zM29 110h1v1.6h-1zM31 110h1v1.6h-1zM36 110h1v1.6h-1zM41 110h1v1.6h-1zM42 110h1v1.6h-1zM32 112h1v1.6h-1zM34 112h1v1.6h-1zM39 112h1v1.6h-1zM44 112h1v1.6h-1zM45 112h1v1.6h-1zM23 114h1v1.6h-1zM23 122h1v1.6h-1zM40 122h1v1.6h-1zM42 122h1v1.6h-1zM47 122h1v1.6h-1zM52 122h1v1.6h-1zM57 122h1v1.6h-1zM58 122h1v1.6h-1zM59 122h1v1.6h-1zM66 128h1v1.6h-1zM32 130h1v1.6h-1zM27 136h1v1.6h-1zM25 138h1v1.6h-1zM18 144h1v1.6h-1zM29 154h1v1.6h-1zM34 154h1v1.6h-1zM41 154h1v1.6h-1zM46 154h1v1.6h-1zM47 154h1v1.6h-1zM33 156h1v1.6h-1zM35 156h1v1.6h-1zM40 156h1v1.6h-1zM45 156h1v1.6h-1zM50 156h1v1.6h-1zM51 156h1v1.6h-1zM66 156h1v1.6h-1zM68 156h1v1.6h-1zM73 156h1v1.6h-1zM78 156h1v1.6h-1zM83 156h1v1.6h-1zM84 156h1v1.6h-1zM25 158h1v1.6h-1zM27 158h1v1.6h-1zM32 158h1v1.6h-1zM37 158h1v1.6h-1zM38 158h1v1.6h-1zM26 160h1v1.6h-1zM30 160h1v1.6h-1zM43 160h1v1.6h-1zM57 160h1v1.6h-1zM59 160h1v1.6h-1zM64 160h1v1.6h-1zM69 160h1v1.6h-1zM74 160h1v1.6h-1zM75 160h1v1.6h-1zM76 160h1v1.6h-1zM19 170h1v1.6h-1zM19 172h1v1.6h-1zM25 174h1v1.6h-1zM23 180h1v1.6h-1zM24 182h1v1.6h-1zM25 192h1v1.6h-1zM24 194h1v1.6h-1zM29 196h1v1.6h-1zM26 198h1v1.6h-1zM35 202h1v1.6h-1zM41 202h1v1.6h-1zM50 202h1v1.6h-1zM59 202h1v1.6h-1zM60 202h1v1.6h-1zM26 204h1v1.6h-1zM33 206h1v1.6h-1zM35 206h1v1.6h-1zM40 206h1v1.6h-1zM45 206h1v1.6h-1zM50 206h1v1.6h-1zM51 206h1v1.6h-1zM25 214h1v1.6h-1zM22 216h1v1.6h-1zM23 226h1v1.6h-1zM24 228h1v1.6h-1zM26 230h1v1.6h-1zM27 232h1v1.6h-1zM24 234h1v1.6h-1zM28 236h1v1.6h-1zM29 238h1v1.6h-1zM21 244h1v1.6h-1zM23 246h1v1.6h-1zM16 248h1v1.6h-1zM31 250h1v1.6h-1zM34 256h1v1.6h-1zM36 256h1v1.6h-1zM41 256h1v1.6h-1zM46 256h1v1.6h-1zM51 256h1v1.6h-1zM52 256h1v1.6h-1zM24 258h1v1.6h-1zM37 268h1v1.6h-1zM25 270h1v1.6h-1zM22 274h1v1.6h-1zM24 276h1v1.6h-1zM33 282h1v1.6h-1zM37 282h1v1.6h-1zM42 282h1v1.6h-1zM45 282h1v1.6h-1zM50 282h1v1.6h-1zM51 282h1v1.6h-1zM16 292h1v1.6h-1zM17 294h1v1.6h-1zM19 298h1v1.6h-1zM25 304h1v1.6h-1zM24 306h1v1.6h-1zM26 312h1v1.6h-1zM16 322h1v1.6h-1zM17 324h1v1.6h-1zM23 326h1v1.6h-1zM16 338h1v1.6h-1zM17 340h1v1.6h-1zM20 344h1v1.6h-1zM21 346h1v1.6h-1zM17 356h1v1.6h-1zM19 358h1v1.6h-1zM21 362h1v1.6h-1zM37 364h1v1.6h-1zM39 364h1v1.6h-1zM44 364h1v1.6h-1zM45 364h1v1.6h-1zM37 370h1v1.6h-1zM39 370h1v1.6h-1zM44 370h1v1.6h-1zM45 370h1v1.6h-1zM42 376h1v1.6h-1zM17 384h1v1.6h-1zM13 386h1v1.6h-1zM17 392h1v1.6h-1zM26 394h1v1.6h-1zM19 398h1v1.6h-1zM21 404h1v1.6h-1zM21 414h1v1.6h-1zM23 420h1v1.6h-1zM20 426h1v1.6h-1zM20 434h1v1.6h-1zM21 438h1v1.6h-1zM17 440h1v1.6h-1zM37 442h1v1.6h-1zM39 444h1v1.6h-1zM22 454h1v1.6h-1zM26 458h1v1.6h-1zM17 460h1v1.6h-1zM19 462h1v1.6h-1zM24 464h1v1.6h-1zM27 466h1v1.6h-1zM24 468h1v1.6h-1zM26 468h1v1.6h-1zM31 468h1v1.6h-1zM36 468h1v1.6h-1zM41 468h1v1.6h-1zM42 468h1v1.6h-1zM24 474h1v1.6h-1zM28 474h1v1.6h-1zM29 474h1v1.6h-1zM26 484h1v1.6h-1zM23 488h1v1.6h-1zM30 490h1v1.6h-1zM20 492h1v1.6h-1zM28 494h1v1.6h-1zM30 494h1v1.6h-1zM33 494h1v1.6h-1zM36 494h1v1.6h-1zM41 494h1v1.6h-1zM42 494h1v1.6h-1zM19 502h1v1.6h-1zM20 504h1v1.6h-1zM19 514h1v1.6h-1zM25 520h1v1.6h-1zM20 522h1v1.6h-1zM21 532h1v1.6h-1zM16 534h1v1.6h-1zM25 536h1v1.6h-1zM24 542h1v1.6h-1zM20 554h1v1.6h-1zM21 556h1v1.6h-1zM37 562h1v1.6h-1zM39 562h1v1.6h-1zM44 562h1v1.6h-1zM45 562h1v1.6h-1zM19 574h1v1.6h-1zM22 576h1v1.6h-1zM34 582h1v1.6h-1zM45 596h1v1.6h-1zM31 598h1v1.6h-1zM37 598h1v1.6h-1zM46 598h1v1.6h-1zM55 598h1v1.6h-1zM64 598h1v1.6h-1zM65 598h1v1.6h-1zM17 612h1v1.6h-1zM23 614h1v1.6h-1zM27 616h1v1.6h-1zM21 618h1v1.6h-1zM28 620h1v1.6h-1zM15 626h1v1.6h-1zM16 628h1v1.6h-1zM26 630h1v1.6h-1zM28 630h1v1.6h-1zM33 630h1v1.6h-1zM38 630h1v1.6h-1zM43 630h1v1.6h-1zM44 630h1v1.6h-1zM25 632h1v1.6h-1zM27 632h1v1.6h-1zM32 632h1v1.6h-1zM37 632h1v1.6h-1zM38 632h1v1.6h-1zM22 634h1v1.6h-1zM33 648h1v1.6h-1zM35 648h1v1.6h-1zM40 648h1v1.6h-1zM45 648h1v1.6h-1zM50 648h1v1.6h-1zM51 648h1v1.6h-1zM25 650h1v1.6h-1zM27 650h1v1.6h-1zM32 650h1v1.6h-1zM37 650h1v1.6h-1zM38 650h1v1.6h-1zM27 652h1v1.6h-1zM40 652h1v1.6h-1zM42 652h1v1.6h-1zM47 652h1v1.6h-1zM52 652h1v1.6h-1zM57 652h1v1.6h-1zM58 652h1v1.6h-1zM59 652h1v1.6h-1zM24 654h1v1.6h-1zM26 654h1v1.6h-1zM27 654h1v1.6h-1zM33 660h1v1.6h-1zM35 660h1v1.6h-1zM40 660h1v1.6h-1zM45 660h1v1.6h-1zM50 660h1v1.6h-1zM51 660h1v1.6h-1zM25 662h1v1.6h-1zM27 662h1v1.6h-1zM32 662h1v1.6h-1zM37 662h1v1.6h-1zM38 662h1v1.6h-1zM33 674h1v1.6h-1zM37 674h1v1.6h-1zM42 674h1v1.6h-1zM45 674h1v1.6h-1zM50 674h1v1.6h-1zM51 674h1v1.6h-1zM27 676h1v1.6h-1zM40 676h1v1.6h-1zM44 676h1v1.6h-1zM49 676h1v1.6h-1zM52 676h1v1.6h-1zM57 676h1v1.6h-1zM58 676h1v1.6h-1zM59 676h1v1.6h-1zM33 682h1v1.6h-1zM37 682h1v1.6h-1zM42 682h1v1.6h-1zM45 682h1v1.6h-1zM50 682h1v1.6h-1zM51 682h1v1.6h-1z"/><path fill="#b5cea8" opacity="0.36" d="M39 22h6v1.6h-6zM107 22h2v1.6h-2zM41 62h6v1.6h-6zM13 92h3v1.6h-3zM12 94h4v1.6h-4zM17 94h4v1.6h-4zM11 96h5v1.6h-5zM12 98h5v1.6h-5zM12 108h3v1.6h-3zM26 108h1v1.6h-1zM29 108h3v1.6h-3zM34 108h3v1.6h-3zM16 110h3v1.6h-3zM30 110h1v1.6h-1zM33 110h3v1.6h-3zM38 110h3v1.6h-3zM19 112h3v1.6h-3zM33 112h1v1.6h-1zM36 112h3v1.6h-3zM41 112h3v1.6h-3zM19 114h4v1.6h-4zM14 120h3v1.6h-3zM18 120h3v1.6h-3zM22 120h4v1.6h-4zM52 120h5v1.6h-5zM24 122h3v1.6h-3zM28 122h3v1.6h-3zM32 122h3v1.6h-3zM41 122h1v1.6h-1zM44 122h3v1.6h-3zM49 122h3v1.6h-3zM54 122h3v1.6h-3zM43 128h2v1.6h-2zM16 130h4v1.6h-4zM11 142h11v1.6h-11zM23 142h6v1.6h-6zM34 142h13v1.6h-13zM15 144h3v1.6h-3zM30 154h4v1.6h-4zM42 154h4v1.6h-4zM20 156h1v1.6h-1zM22 156h1v1.6h-1zM24 156h4v1.6h-4zM34 156h1v1.6h-1zM37 156h3v1.6h-3zM42 156h3v1.6h-3zM47 156h3v1.6h-3zM53 156h1v1.6h-1zM55 156h1v1.6h-1zM57 156h4v1.6h-4zM67 156h1v1.6h-1zM70 156h3v1.6h-3zM75 156h3v1.6h-3zM80 156h3v1.6h-3zM26 158h1v1.6h-1zM29 158h3v1.6h-3zM34 158h3v1.6h-3zM27 160h3v1.6h-3zM44 160h1v1.6h-1zM46 160h1v1.6h-1zM48 160h4v1.6h-4zM58 160h1v1.6h-1zM61 160h3v1.6h-3zM66 160h3v1.6h-3zM71 160h3v1.6h-3zM15 170h4v1.6h-4zM16 172h3v1.6h-3zM19 180h4v1.6h-4zM20 182h4v1.6h-4zM19 192h6v1.6h-6zM21 194h3v1.6h-3zM16 196h4v1.6h-4zM21 196h4v1.6h-4zM26 196h3v1.6h-3zM36 202h5v1.6h-5zM21 206h1v1.6h-1zM23 206h1v1.6h-1zM25 206h3v1.6h-3zM34 206h1v1.6h-1zM37 206h3v1.6h-3zM42 206h3v1.6h-3zM47 206h3v1.6h-3zM19 214h6v1.6h-6zM16 216h1v1.6h-1zM18 216h4v1.6h-4zM19 226h4v1.6h-4zM21 228h3v1.6h-3zM17 230h4v1.6h-4zM22 230h4v1.6h-4zM28 238h1v1.6h-1zM13 248h3v1.6h-3zM20 256h3v1.6h-3zM35 256h1v1.6h-1zM38 256h3v1.6h-3zM43 256h3v1.6h-3zM48 256h3v1.6h-3zM21 276h3v1.6h-3zM20 282h1v1.6h-1zM22 282h1v1.6h-1zM24 282h4v1.6h-4zM34 282h3v1.6h-3zM39 282h3v1.6h-3zM44 282h1v1.6h-1zM47 282h3v1.6h-3zM11 292h5v1.6h-5zM12 294h5v1.6h-5zM16 298h3v1.6h-3zM19 304h6v1.6h-6zM16 306h4v1.6h-4zM21 306h3v1.6h-3zM19 312h7v1.6h-7zM11 322h5v1.6h-5zM12 324h5v1.6h-5zM19 326h4v1.6h-4zM11 338h5v1.6h-5zM12 340h5v1.6h-5zM16 344h4v1.6h-4zM17 346h4v1.6h-4zM38 364h1v1.6h-1zM41 364h3v1.6h-3zM38 370h1v1.6h-1zM41 370h3v1.6h-3zM9 386h4v1.6h-4zM15 398h4v1.6h-4zM16 404h5v1.6h-5zM16 414h5v1.6h-5zM19 420h4v1.6h-4zM15 426h5v1.6h-5zM13 440h4v1.6h-4zM30 444h4v1.6h-4zM13 460h4v1.6h-4zM15 462h4v1.6h-4zM17 464h3v1.6h-3zM21 464h3v1.6h-3zM23 466h4v1.6h-4zM25 468h1v1.6h-1zM28 468h3v1.6h-3zM33 468h3v1.6h-3zM38 468h3v1.6h-3zM25 474h3v1.6h-3zM19 492h1v1.6h-1zM29 494h1v1.6h-1zM32 494h1v1.6h-1zM35 494h1v1.6h-1zM38 494h3v1.6h-3zM15 502h4v1.6h-4zM16 504h4v1.6h-4zM16 514h3v1.6h-3zM19 520h6v1.6h-6zM17 522h3v1.6h-3zM13 534h3v1.6h-3zM19 536h6v1.6h-6zM21 542h3v1.6h-3zM7 548h11v1.6h-11zM19 548h7v1.6h-7zM15 554h5v1.6h-5zM16 556h5v1.6h-5zM38 562h1v1.6h-1zM41 562h3v1.6h-3zM7 568h11v1.6h-11zM19 568h6v1.6h-6zM15 574h4v1.6h-4zM16 576h4v1.6h-4zM21 576h1v1.6h-1zM31 582h3v1.6h-3zM32 596h4v1.6h-4zM32 598h5v1.6h-5zM4 604h2v1.6h-2zM30 604h6v1.6h-6zM37 604h2v1.6h-2zM4 606h4v1.6h-4zM32 606h5v1.6h-5zM38 606h2v1.6h-2zM16 618h5v1.6h-5zM11 626h4v1.6h-4zM12 628h4v1.6h-4zM12 630h3v1.6h-3zM27 630h1v1.6h-1zM30 630h3v1.6h-3zM35 630h3v1.6h-3zM40 630h3v1.6h-3zM26 632h1v1.6h-1zM29 632h3v1.6h-3zM34 632h3v1.6h-3zM19 634h3v1.6h-3zM20 648h1v1.6h-1zM22 648h1v1.6h-1zM24 648h4v1.6h-4zM34 648h1v1.6h-1zM37 648h3v1.6h-3zM42 648h3v1.6h-3zM47 648h3v1.6h-3zM26 650h1v1.6h-1zM29 650h3v1.6h-3zM34 650h3v1.6h-3zM28 652h1v1.6h-1zM30 652h1v1.6h-1zM32 652h3v1.6h-3zM41 652h1v1.6h-1zM44 652h3v1.6h-3zM49 652h3v1.6h-3zM54 652h3v1.6h-3zM25 654h1v1.6h-1zM20 660h1v1.6h-1zM22 660h1v1.6h-1zM24 660h4v1.6h-4zM34 660h1v1.6h-1zM37 660h3v1.6h-3zM42 660h3v1.6h-3zM47 660h3v1.6h-3zM26 662h1v1.6h-1zM29 662h3v1.6h-3zM34 662h3v1.6h-3zM20 674h1v1.6h-1zM22 674h1v1.6h-1zM24 674h4v1.6h-4zM34 674h3v1.6h-3zM39 674h3v1.6h-3zM44 674h1v1.6h-1zM47 674h3v1.6h-3zM28 676h1v1.6h-1zM30 676h1v1.6h-1zM32 676h3v1.6h-3zM41 676h3v1.6h-3zM46 676h3v1.6h-3zM51 676h1v1.6h-1zM54 676h3v1.6h-3zM20 682h1v1.6h-1zM22 682h1v1.6h-1zM24 682h4v1.6h-4zM34 682h3v1.6h-3zM39 682h3v1.6h-3zM44 682h1v1.6h-1zM47 682h3v1.6h-3z"/><path fill="#ce9178" opacity="0.36" d="M47 22h7v1.6h-7zM56 22h7v1.6h-7zM65 22h7v1.6h-7zM91 22h6v1.6h-6zM99 22h7v1.6h-7zM111 22h1v1.6h-1zM11 26h7v1.6h-7zM12 28h7v1.6h-7zM9 30h7v1.6h-7zM10 32h7v1.6h-7zM10 34h7v1.6h-7zM11 44h7v1.6h-7zM12 46h7v1.6h-7zM9 48h7v1.6h-7zM10 50h7v1.6h-7zM10 52h7v1.6h-7zM11 54h7v1.6h-7zM49 62h7v1.6h-7zM58 62h7v1.6h-7zM67 62h7v1.6h-7zM13 82h4v1.6h-4zM20 84h6v1.6h-6zM17 86h6v1.6h-6zM21 88h10v1.6h-10zM14 90h6v1.6h-6zM16 108h5v1.6h-5zM20 110h5v1.6h-5zM23 112h5v1.6h-5zM15 128h27v1.6h-27zM46 128h11v1.6h-11zM58 128h8v1.6h-8zM21 130h11v1.6h-11zM21 138h4v1.6h-4zM20 174h5v1.6h-5zM20 198h6v1.6h-6zM43 202h7v1.6h-7zM52 202h7v1.6h-7zM15 204h11v1.6h-11zM20 232h7v1.6h-7zM18 234h6v1.6h-6zM17 236h11v1.6h-11zM17 244h4v1.6h-4zM19 246h4v1.6h-4zM25 250h6v1.6h-6zM24 256h5v1.6h-5zM20 258h4v1.6h-4zM18 270h7v1.6h-7zM15 274h7v1.6h-7zM13 356h4v1.6h-4zM15 358h4v1.6h-4zM17 362h4v1.6h-4zM13 384h4v1.6h-4zM13 392h4v1.6h-4zM20 394h6v1.6h-6zM16 434h4v1.6h-4zM17 438h4v1.6h-4zM26 442h1v1.6h-1zM28 442h9v1.6h-9zM20 444h9v1.6h-9zM35 444h4v1.6h-4zM14 454h8v1.6h-8zM18 458h8v1.6h-8zM18 484h8v1.6h-8zM21 488h2v1.6h-2zM22 490h8v1.6h-8zM17 532h4v1.6h-4zM15 596h16v1.6h-16zM37 596h8v1.6h-8zM39 598h7v1.6h-7zM48 598h7v1.6h-7zM57 598h7v1.6h-7zM13 612h4v1.6h-4zM17 614h6v1.6h-6zM21 616h6v1.6h-6zM16 630h5v1.6h-5z"/><path fill="#9cdcfe" opacity="0.36" d="M0 24h23v1.6h-23zM24 24h1v1.6h-1zM4 26h6v1.6h-6zM4 28h7v1.6h-7zM4 30h4v1.6h-4zM4 32h5v1.6h-5zM4 34h5v1.6h-5zM4 36h6v1.6h-6zM11 36h7v1.6h-7zM0 42h29v1.6h-29zM30 42h1v1.6h-1zM4 44h6v1.6h-6zM4 46h7v1.6h-7zM4 48h4v1.6h-4zM4 50h5v1.6h-5zM4 52h5v1.6h-5zM4 54h6v1.6h-6zM4 56h5v1.6h-5zM10 56h7v1.6h-7zM4 82h8v1.6h-8zM4 84h15v1.6h-15zM4 86h12v1.6h-12zM4 88h16v1.6h-16zM4 90h9v1.6h-9zM4 92h8v1.6h-8zM4 94h7v1.6h-7zM4 96h6v1.6h-6zM4 98h7v1.6h-7zM4 106h11v1.6h-11zM4 108h7v1.6h-7zM4 110h11v1.6h-11zM4 112h14v1.6h-14zM4 114h14v1.6h-14zM4 116h11v1.6h-11zM8 120h5v1.6h-5zM27 120h24v1.6h-24zM4 122h7v1.6h-7zM4 128h10v1.6h-10zM4 130h11v1.6h-11zM4 136h6v1.6h-6zM4 138h16v1.6h-16zM30 142h3v1.6h-3zM48 142h9v1.6h-9zM58 142h1v1.6h-1zM8 144h6v1.6h-6zM8 154h10v1.6h-10zM8 156h11v1.6h-11zM8 158h13v1.6h-13zM8 160h7v1.6h-7zM8 170h6v1.6h-6zM8 172h7v1.6h-7zM8 174h11v1.6h-11zM12 180h6v1.6h-6zM12 182h7v1.6h-7zM8 192h10v1.6h-10zM8 194h12v1.6h-12zM8 196h7v1.6h-7zM8 198h11v1.6h-11zM8 202h11v1.6h-11zM8 204h6v1.6h-6zM8 206h12v1.6h-12zM8 214h10v1.6h-10zM8 216h7v1.6h-7zM8 226h10v1.6h-10zM8 228h12v1.6h-12zM8 230h8v1.6h-8zM8 232h11v1.6h-11zM8 234h9v1.6h-9zM8 236h8v1.6h-8zM8 238h19v1.6h-19zM8 244h8v1.6h-8zM8 246h10v1.6h-10zM8 248h4v1.6h-4zM8 250h16v1.6h-16zM8 256h11v1.6h-11zM8 258h11v1.6h-11zM4 268h11v1.6h-11zM4 270h13v1.6h-13zM8 274h6v1.6h-6zM8 276h12v1.6h-12zM8 282h11v1.6h-11zM4 292h6v1.6h-6zM4 294h7v1.6h-7zM8 298h7v1.6h-7zM8 304h10v1.6h-10zM8 306h7v1.6h-7zM8 312h10v1.6h-10zM4 322h6v1.6h-6zM4 324h7v1.6h-7zM4 326h14v1.6h-14zM4 338h6v1.6h-6zM4 340h7v1.6h-7zM8 344h7v1.6h-7zM8 346h8v1.6h-8zM4 356h8v1.6h-8zM4 358h10v1.6h-10zM8 362h8v1.6h-8zM8 364h22v1.6h-22zM8 370h22v1.6h-22zM8 376h11v1.6h-11zM4 384h8v1.6h-8zM4 386h4v1.6h-4zM4 392h8v1.6h-8zM4 394h15v1.6h-15zM8 398h6v1.6h-6zM8 404h7v1.6h-7zM8 414h7v1.6h-7zM8 420h10v1.6h-10zM8 426h6v1.6h-6zM4 434h11v1.6h-11zM8 438h8v1.6h-8zM8 440h4v1.6h-4zM8 442h17v1.6h-17zM8 444h11v1.6h-11zM4 454h9v1.6h-9zM8 458h9v1.6h-9zM8 460h4v1.6h-4zM8 462h6v1.6h-6zM8 464h8v1.6h-8zM8 466h14v1.6h-14zM8 468h11v1.6h-11zM8 474h10v1.6h-10zM8 484h9v1.6h-9zM12 488h8v1.6h-8zM12 490h9v1.6h-9zM12 492h6v1.6h-6zM12 494h11v1.6h-11zM8 502h6v1.6h-6zM8 504h7v1.6h-7zM8 514h7v1.6h-7zM8 520h10v1.6h-10zM8 522h8v1.6h-8zM8 532h8v1.6h-8zM8 534h4v1.6h-4zM8 536h10v1.6h-10zM8 542h12v1.6h-12zM27 548h1v1.6h-1zM8 554h6v1.6h-6zM8 556h7v1.6h-7zM8 562h22v1.6h-22zM26 568h1v1.6h-1zM8 574h6v1.6h-6zM8 576h7v1.6h-7zM8 582h22v1.6h-22zM4 596h10v1.6h-10zM4 598h11v1.6h-11zM11 602h16v1.6h-16zM28 602h1v1.6h-1zM7 604h1v1.6h-1zM9 604h20v1.6h-20zM9 606h1v1.6h-1zM11 606h20v1.6h-20zM4 612h8v1.6h-8zM4 614h12v1.6h-12zM4 616h16v1.6h-16zM4 618h11v1.6h-11zM4 620h6v1.6h-6zM4 626h6v1.6h-6zM4 628h7v1.6h-7zM4 630h7v1.6h-7zM4 632h17v1.6h-17zM4 634h14v1.6h-14zM11 644h27v1.6h-27zM39 644h1v1.6h-1zM8 648h11v1.6h-11zM8 650h13v1.6h-13zM8 652h7v1.6h-7zM8 654h10v1.6h-10zM8 660h11v1.6h-11zM8 662h13v1.6h-13zM11 670h22v1.6h-22zM34 670h1v1.6h-1zM8 674h11v1.6h-11zM8 676h7v1.6h-7zM8 682h11v1.6h-11z"/><path fill="#ffd700" opacity="0.36" d="M0 38h2v1.6h-2zM0 58h2v1.6h-2zM18 80h1v1.6h-1zM4 146h1v1.6h-1zM12 150h1v1.6h-1zM4 162h1v1.6h-1zM16 168h1v1.6h-1zM12 178h1v1.6h-1zM8 184h1v1.6h-1zM4 186h1v1.6h-1zM16 190h1v1.6h-1zM4 208h1v1.6h-1zM19 212h1v1.6h-1zM4 218h1v1.6h-1zM22 224h1v1.6h-1zM4 240h1v1.6h-1zM15 242h1v1.6h-1zM4 252h1v1.6h-1zM17 254h1v1.6h-1zM4 260h1v1.6h-1zM0 262h1v1.6h-1zM17 266h1v1.6h-1zM16 272h1v1.6h-1zM4 278h1v1.6h-1zM12 280h1v1.6h-1zM4 284h1v1.6h-1zM0 286h1v1.6h-1zM18 290h1v1.6h-1zM16 296h1v1.6h-1zM4 300h1v1.6h-1zM16 302h1v1.6h-1zM4 308h1v1.6h-1zM22 310h1v1.6h-1zM4 314h1v1.6h-1zM0 316h1v1.6h-1zM19 320h1v1.6h-1zM16 328h1v1.6h-1zM31 328h1v1.6h-1zM22 330h1v1.6h-1zM39 330h1v1.6h-1zM0 332h1v1.6h-1zM18 336h1v1.6h-1zM16 342h1v1.6h-1zM4 348h1v1.6h-1zM0 350h1v1.6h-1zM22 354h1v1.6h-1zM14 360h1v1.6h-1zM4 366h1v1.6h-1zM16 368h1v1.6h-1zM4 372h1v1.6h-1zM12 374h1v1.6h-1zM4 378h1v1.6h-1zM0 380h1v1.6h-1zM17 382h1v1.6h-1zM0 388h1v1.6h-1zM17 390h1v1.6h-1zM10 396h1v1.6h-1zM4 400h1v1.6h-1zM16 402h1v1.6h-1zM4 406h1v1.6h-1zM0 408h1v1.6h-1zM23 410h1v1.6h-1zM10 412h1v1.6h-1zM4 416h1v1.6h-1zM16 418h1v1.6h-1zM4 422h1v1.6h-1zM16 424h1v1.6h-1zM4 428h1v1.6h-1zM0 430h1v1.6h-1zM21 432h1v1.6h-1zM11 436h1v1.6h-1zM4 446h1v1.6h-1zM0 448h1v1.6h-1zM21 452h1v1.6h-1zM11 456h1v1.6h-1zM4 470h1v1.6h-1zM19 472h1v1.6h-1zM4 476h1v1.6h-1zM0 478h1v1.6h-1zM18 480h1v1.6h-1zM16 482h1v1.6h-1zM17 486h1v1.6h-1zM8 496h1v1.6h-1zM4 498h1v1.6h-1zM15 500h1v1.6h-1zM4 506h1v1.6h-1zM0 508h1v1.6h-1zM20 510h1v1.6h-1zM16 512h1v1.6h-1zM4 516h1v1.6h-1zM14 518h1v1.6h-1zM4 524h1v1.6h-1zM0 526h1v1.6h-1zM20 528h1v1.6h-1zM15 530h1v1.6h-1zM4 538h1v1.6h-1zM12 540h1v1.6h-1zM4 544h1v1.6h-1zM0 546h1v1.6h-1zM22 552h1v1.6h-1zM4 558h1v1.6h-1zM36 560h1v1.6h-1zM4 564h1v1.6h-1zM0 566h1v1.6h-1zM22 572h1v1.6h-1zM4 578h1v1.6h-1zM36 580h1v1.6h-1zM4 584h1v1.6h-1zM16 586h1v1.6h-1zM37 586h1v1.6h-1zM22 588h1v1.6h-1zM43 588h1v1.6h-1zM32 590h1v1.6h-1zM44 590h1v1.6h-1zM0 592h1v1.6h-1zM21 594h1v1.6h-1zM0 600h1v1.6h-1zM40 604h1v1.6h-1zM41 606h1v1.6h-1zM0 608h1v1.6h-1zM18 610h1v1.6h-1zM0 622h1v1.6h-1zM19 624h1v1.6h-1zM0 636h1v1.6h-1zM13 646h1v1.6h-1zM4 656h1v1.6h-1zM8 658h1v1.6h-1zM4 664h1v1.6h-1zM0 666h1v1.6h-1zM7 672h1v1.6h-1zM4 678h1v1.6h-1zM9 680h1v1.6h-1zM4 684h1v1.6h-1zM0 686h1v1.6h-1z"/><path fill="#d7ba7d" opacity="0.36" d="M0 72h13v1.6h-13zM0 74h18v1.6h-18zM0 76h18v1.6h-18zM0 78h19v1.6h-19zM0 80h17v1.6h-17zM8 118h3v1.6h-3zM12 118h3v1.6h-3zM16 118h4v1.6h-4zM21 118h7v1.6h-7zM29 118h4v1.6h-4zM34 118h4v1.6h-4zM39 118h5v1.6h-5zM4 150h7v1.6h-7zM4 168h11v1.6h-11zM8 178h3v1.6h-3zM4 190h11v1.6h-11zM4 212h14v1.6h-14zM4 224h17v1.6h-17zM4 242h10v1.6h-10zM4 254h12v1.6h-12zM0 266h16v1.6h-16zM4 272h11v1.6h-11zM4 280h7v1.6h-7zM0 290h17v1.6h-17zM4 296h11v1.6h-11zM4 302h11v1.6h-11zM4 310h17v1.6h-17zM0 320h18v1.6h-18zM4 328h11v1.6h-11zM18 328h7v1.6h-7zM26 328h4v1.6h-4zM4 330h17v1.6h-17zM24 330h8v1.6h-8zM33 330h5v1.6h-5zM0 336h17v1.6h-17zM4 342h11v1.6h-11zM0 354h21v1.6h-21zM4 360h9v1.6h-9zM4 368h11v1.6h-11zM4 374h7v1.6h-7zM0 382h16v1.6h-16zM0 390h16v1.6h-16zM4 396h5v1.6h-5zM4 402h11v1.6h-11zM0 410h22v1.6h-22zM4 412h5v1.6h-5zM4 418h11v1.6h-11zM4 424h11v1.6h-11zM0 432h20v1.6h-20zM4 436h6v1.6h-6zM0 452h20v1.6h-20zM4 456h6v1.6h-6zM4 472h7v1.6h-7zM12 472h6v1.6h-6zM0 480h17v1.6h-17zM4 482h11v1.6h-11zM8 486h8v1.6h-8zM4 500h10v1.6h-10zM0 510h19v1.6h-19zM4 512h11v1.6h-11zM4 518h9v1.6h-9zM0 528h19v1.6h-19zM4 530h10v1.6h-10zM4 540h7v1.6h-7zM4 550h13v1.6h-13zM4 552h17v1.6h-17zM4 560h21v1.6h-21zM26 560h9v1.6h-9zM4 570h13v1.6h-13zM4 572h17v1.6h-17zM4 580h21v1.6h-21zM26 580h9v1.6h-9zM4 586h11v1.6h-11zM18 586h10v1.6h-10zM29 586h7v1.6h-7zM4 588h17v1.6h-17zM24 588h10v1.6h-10zM35 588h7v1.6h-7zM4 590h20v1.6h-20zM25 590h6v1.6h-6zM34 590h4v1.6h-4zM39 590h4v1.6h-4zM0 594h20v1.6h-20zM0 610h17v1.6h-17zM0 624h18v1.6h-18zM4 646h3v1.6h-3zM8 646h4v1.6h-4zM4 658h3v1.6h-3zM4 672h2v1.6h-2zM4 680h4v1.6h-4z"/><path fill="#c586c0" opacity="0.36" d="M4 142h6v1.6h-6zM0 548h6v1.6h-6zM0 568h6v1.6h-6zM0 602h10v1.6h-10zM0 644h10v1.6h-10zM0 670h10v1.6h-10z"/></svg>
<div class="abs" style="left:1906px;top:92px;width:1px;height:703px;background:#2b2b2b"></div>
<div class="abs" style="left:1906px;top:145px;width:14px;height:67px;background:#434343"></div>
<div class="abs" style="left:1906px;top:177px;width:14px;height:2px;background:#6e6e6e"></div>
<div class="abs" style="left:339px;top:792px;width:1581px;height:266px;background:#181818;border-top:1px solid #2b2b2b"></div>
<span class="abs" style="left:359px;top:804px;font-size:11px;line-height:15px;color:#9d9d9d;white-space:nowrap;transform:scaleX(0.8670);transform-origin:0 0;">PROBLEMS</span>
<span class="abs" style="left:436px;top:804px;font-size:11px;line-height:15px;color:#9d9d9d;white-space:nowrap;transform:scaleX(0.9288);transform-origin:0 0;">OUTPUT</span>
<span class="abs" style="left:502px;top:804px;font-size:11px;line-height:15px;color:#9d9d9d;white-space:nowrap;transform:scaleX(0.8962);transform-origin:0 0;">DEBUG CONSOLE</span>
<span class="abs" style="left:611px;top:804px;font-size:11px;line-height:15px;color:#e7e7e7;white-space:nowrap;transform:scaleX(0.9170);transform-origin:0 0;">TERMINAL</span>
<span class="abs" style="left:687px;top:804px;font-size:11px;line-height:15px;color:#9d9d9d;white-space:nowrap;transform:scaleX(0.8489);transform-origin:0 0;">PORTS</span>
<div class="abs" style="left:610px;top:820px;width:54px;height:1px;background:#0078d4"></div>
<svg style="left:1689px;top:802px" width="16" height="15" viewBox="0 0 16 15"><path d="M2 1 H15 L14 14 H1 Z" fill="none" stroke="#cccccc" stroke-width="1.1"/><path d="M4 4 L7 6.5 L4 9 M7 10.5 H11" stroke="#cccccc" stroke-width="1.1" fill="none"/></svg>
<span class="abs" style="left:1710px;top:803px;font-size:12px;line-height:15px;color:#cccccc;white-space:nowrap;letter-spacing:-0.432px;">esbuild</span>
<svg style="left:1753px;top:802px" width="15" height="15" viewBox="0 0 15 15"><path d="M7.5 1 V14 M1 7.5 H14" stroke="#cccccc" stroke-width="1.2"/></svg>
<svg style="left:1771px;top:807px" width="9" height="6" viewBox="0 0 9 6"><path d="M1 1 L4.5 4.5 L8 1" stroke="#cccccc" stroke-width="1" fill="none"/></svg>
<svg style="left:1792px;top:803px" width="14" height="14" viewBox="0 0 14 14"><rect x="0.6" y="0.6" width="12.8" height="12.8" fill="none" stroke="#cccccc" stroke-width="1.2"/><path d="M7 1 V13" stroke="#cccccc" stroke-width="1.2"/></svg>
<svg style="left:1816px;top:803px" width="12" height="14" viewBox="0 0 12 14"><path d="M0.8 2.5 H11.2 M4 2.5 V1 H8 V2.5 M2 2.5 L2.7 13 H9.3 L10 2.5 M4.3 5 V11 M6 5 V11 M7.7 5 V11" fill="none" stroke="#cccccc" stroke-width="1.1"/></svg>
<svg style="left:1839px;top:809px" width="14" height="4" viewBox="0 0 14 4"><circle cx="2" cy="2" r="1.1" fill="#cccccc"/><circle cx="7" cy="2" r="1.1" fill="#cccccc"/><circle cx="12" cy="2" r="1.1" fill="#cccccc"/></svg>
<svg style="left:1864px;top:803px" width="14" height="14" viewBox="0 0 14 14"><path d="M1 4.5 V1 H4.5 M9.5 1 H13 V4.5 M13 9.5 V13 H9.5 M4.5 13 H1 V9.5" fill="none" stroke="#cccccc" stroke-width="1.2"/></svg>
<svg style="left:1891px;top:804px" width="11" height="11" viewBox="0 0 11 11"><path d="M1 1 L10 10 M10 1 L1 10" stroke="#cccccc" stroke-width="1.3"/></svg>
<div class="term" style="top:838px"><span style="color:#8b8b8b">11:21:23</span> <span style="color:#3b8eea">[200]</span> <span style="color:#e5e5e5">/fr/about</span> <span style="color:#8b8b8b">9ms</span></div>
<div class="term" style="top:855px"><span style="color:#8b8b8b">11:21:30</span> <span style="color:#3b8eea">[200]</span> <span style="color:#e5e5e5">/fr/about</span> <span style="color:#8b8b8b">8ms</span></div>
<div class="term" style="top:872px"><span style="color:#8b8b8b">11:21:44</span> <span style="color:#3b8eea">[200]</span> <span style="color:#e5e5e5">/fr/about</span> <span style="color:#8b8b8b">23ms</span></div>
<div class="term" style="top:889px"><span style="color:#8b8b8b">11:21:52</span> <span style="color:#3b8eea">[200]</span> <span style="color:#e5e5e5">/fr/about</span> <span style="color:#8b8b8b">9ms</span></div>
<div class="term" style="top:906px"><span style="color:#8b8b8b">11:22:01</span> <span style="color:#3b8eea">[200]</span> <span style="color:#e5e5e5">/fr/about</span> <span style="color:#8b8b8b">12ms</span></div>
<div class="term" style="top:923px"><span style="color:#8b8b8b">11:22:05</span> <span style="color:#3b8eea">[200]</span> <span style="color:#e5e5e5">/fr/about</span> <span style="color:#8b8b8b">9ms</span></div>
<div class="term" style="top:940px"><span style="color:#8b8b8b">11:22:10</span> <span style="color:#3b8eea">[200]</span> <span style="color:#e5e5e5">/fr/about</span> <span style="color:#8b8b8b">10ms</span></div>
<div class="term" style="top:957px"><span style="color:#8b8b8b">11:22:21</span> <span style="color:#3b8eea">[200]</span> <span style="color:#e5e5e5">/fr/about</span> <span style="color:#8b8b8b">22ms</span></div>
<div class="term" style="top:974px"><span style="color:#8b8b8b">11:22:24</span> <span style="color:#3b8eea">[200]</span> <span style="color:#e5e5e5">/fr/about</span> <span style="color:#8b8b8b">9ms</span></div>
<div class="term" style="top:991px"><span style="color:#8b8b8b">11:22:30</span> <span style="color:#3b8eea">[200]</span> <span style="color:#e5e5e5">/fr/about</span> <span style="color:#8b8b8b">9ms</span></div>
<div class="term" style="top:1008px"><span style="color:#8b8b8b">11:22:40</span> <span style="color:#3b8eea">[200]</span> <span style="color:#e5e5e5">/fr/about</span> <span style="color:#8b8b8b">12ms</span></div>
<div class="term" style="top:1025px"><span style="color:#8b8b8b">11:22:48</span> <span style="color:#3b8eea">[200]</span> <span style="color:#e5e5e5">/fr/about</span> <span style="color:#8b8b8b">15ms</span></div>
<div class="abs" style="left:359px;top:1042px;width:8px;height:16px;border:1px solid #cccccc"></div>
<div class="abs" style="left:1906px;top:837px;width:1px;height:221px;background:#2b2b2b"></div>
<div class="abs" style="left:0;top:1058px;width:1920px;height:22px;background:#181818;border-top:1px solid #2b2b2b"></div>
<div class="abs" style="left:0;top:1058px;width:34px;height:22px;background:#0078d4"></div>
<svg style="left:10px;top:1060px" width="14" height="16" viewBox="0 0 14 16"><path d="M3 6.5 L7 10.5 L3 14.5 M12 2.5 L8 6.5 L12 10.5" stroke="#ffffff" stroke-width="1.3" fill="none"/></svg>
<svg style="left:43px;top:1063px" width="13" height="13" viewBox="0 0 13 13"><circle cx="6.5" cy="6.5" r="5.6" fill="none" stroke="#cccccc" stroke-width="1.1"/><path d="M4 4 L9 9 M9 4 L4 9" stroke="#cccccc" stroke-width="1.1"/></svg>
<span class="abs" style="left:59px;top:1062px;font-size:12px;line-height:16px;color:#cccccc">0</span>
<svg style="left:69px;top:1062px" width="14" height="13" viewBox="0 0 14 13"><path d="M7 1 L13 12 H1 Z" fill="none" stroke="#cccccc" stroke-width="1.1"/><path d="M7 5 V8.5 M7 9.8 V11" stroke="#cccccc" stroke-width="1.1"/></svg>
<span class="abs" style="left:86px;top:1062px;font-size:12px;line-height:16px;color:#cccccc">0</span>
<span class="abs" style="left:1482px;top:1062px;font-size:12px;line-height:16px;color:#cccccc;white-space:nowrap;letter-spacing:-0.230px;">Ln 48, Col 23</span>
<span class="abs" style="left:1566px;top:1062px;font-size:12px;line-height:16px;color:#cccccc;white-space:nowrap;transform:scaleX(0.9264);transform-origin:0 0;">Tab Size: 4</span>
<span class="abs" style="left:1637px;top:1062px;font-size:12px;line-height:16px;color:#cccccc;white-space:nowrap;transform:scaleX(0.9236);transform-origin:0 0;">UTF-8</span>
<span class="abs" style="left:1684px;top:1062px;font-size:12px;line-height:16px;color:#cccccc;white-space:nowrap;transform:scaleX(0.8297);transform-origin:0 0;">CRLF</span>
<span class="abs" style="left:1747px;top:1062px;font-size:12px;line-height:16px;color:#cccccc;white-space:nowrap;transform:scaleX(0.8048);transform-origin:0 0;">SCSS</span>
<span class="abs" style="left:1836px;top:1062px;font-size:12px;line-height:16px;color:#cccccc;white-space:nowrap;letter-spacing:-0.035px;">Prettier</span>
<svg style="left:1728px;top:1062px" width="14" height="14" viewBox="0 0 14 14"><path d="M4 1 Q2 1 2 3 V5.5 Q2 7 1 7 Q2 7 2 8.5 V11 Q2 13 4 13" fill="none" stroke="#cccccc" stroke-width="1.1"/><circle cx="9.5" cy="10.5" r="2.3" fill="none" stroke="#cccccc" stroke-width="1.1"/><path d="M9.5 2 V8" stroke="#cccccc" stroke-width="1.1"/></svg>
<svg style="left:1789px;top:1063px" width="15" height="13" viewBox="0 0 17 15"><circle cx="5.4" cy="4.6" r="3" fill="none" stroke="#e0e0e0" stroke-width="1.7"/><circle cx="11.2" cy="4.6" r="3" fill="none" stroke="#e0e0e0" stroke-width="1.7"/><path d="M1.2 10.8 Q1.2 7.6 4.5 7.6 H12.1 Q15.4 7.6 15.4 10.8 Q15.4 14.2 8.3 14.2 Q1.2 14.2 1.2 10.8 Z" fill="none" stroke="#e0e0e0" stroke-width="1.7"/><rect x="6" y="9.4" width="1.5" height="2.8" fill="#e0e0e0"/><rect x="9.2" y="9.4" width="1.5" height="2.8" fill="#e0e0e0"/></svg>
<svg style="left:1818px;top:1063px" width="16" height="12" viewBox="0 0 16 12"><path d="M1 6 L4 10 L10 1 M7 9 L8 10 L15 1" fill="none" stroke="#cccccc" stroke-width="1.1"/></svg>
<svg style="left:1891px;top:1062px" width="13" height="14" viewBox="0 0 13 14"><path d="M2 10.5 V6 Q2 1.5 6.5 1.5 Q11 1.5 11 6 V10.5 L12 11.5 H1 Z M5 12.5 Q6.5 14 8 12.5" fill="none" stroke="#cccccc" stroke-width="1.1"/></svg>
</body></html>
